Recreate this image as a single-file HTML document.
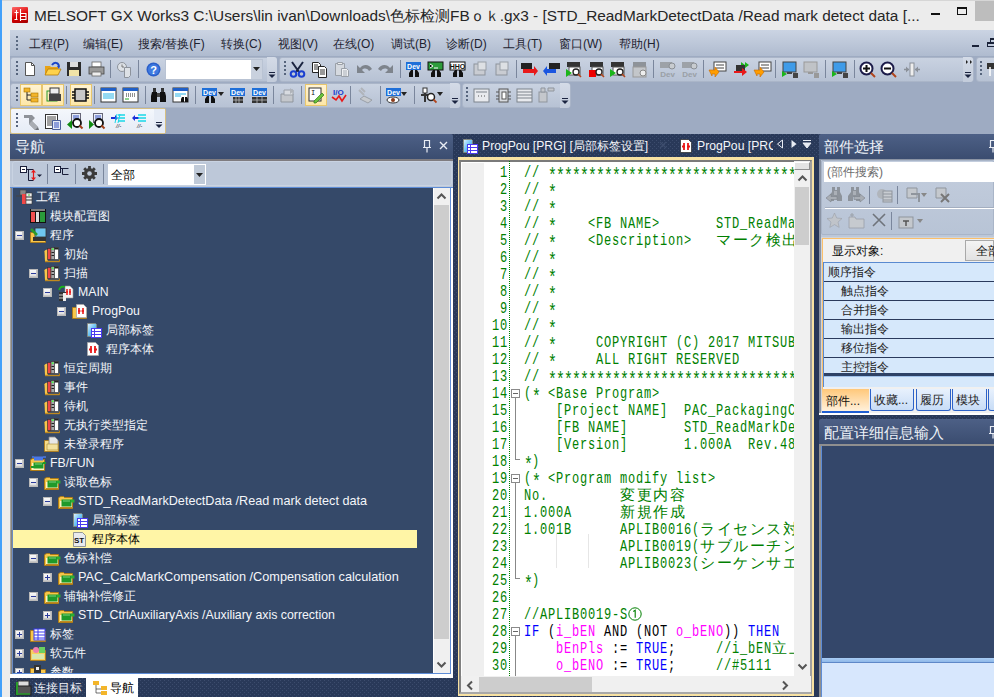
<!DOCTYPE html><html><head><meta charset="utf-8"><style>
*{box-sizing:border-box;margin:0;padding:0}
html,body{width:994px;height:697px;overflow:hidden;background:#a0adc3;font-family:"Liberation Sans",sans-serif;font-size:12px;color:#000;position:relative}
div,span{position:absolute}
.t{white-space:nowrap;line-height:1}
</style></head><body><div style="left:0px;top:0px;width:994px;height:697px;background:#ececec"></div><div style="left:0px;top:0px;width:2px;height:697px;background:#42a0fa"></div><div style="left:2px;top:0px;width:992px;height:1px;background:#d6d6d6"></div><div style="left:12px;top:7px;width:16px;height:16px;background:linear-gradient(160deg,#ff6a6a,#d80000 55%,#a00000);border-radius:1px"></div><svg style="position:absolute;left:12px;top:7px" width="16" height="16"><path d="M2.5 5.5h4M4.5 3v9.5M2.5 12.5h3M8.5 2v12M9 6.5h5v6h-5M9 9.5h5" stroke="#fff" stroke-width="1.1" fill="none"/></svg><span class="t" style="left:34px;top:8px;font-size:15.4px;color:#262626">MELSOFT GX Works3 C:\Users\lin ivan\Downloads\色标检测FBｏｋ.gx3 - [STD_ReadMarkDetectData /Read mark detect data [...</span><div style="left:931px;top:13px;width:9px;height:2px;background:#111"></div><div style="left:957px;top:7px;width:10px;height:8px;border:1px solid #111;border-top-width:2px"></div><div style="left:975px;top:1px;width:19px;height:20px;background:#bdbdbd"></div><div style="left:10px;top:30px;width:984px;height:26px;background:linear-gradient(#cbd4e3,#afbbcf)"></div><div style="left:16px;top:36px;width:2px;height:2px;background:#5b6a82"></div><div style="left:16px;top:40px;width:2px;height:2px;background:#5b6a82"></div><div style="left:16px;top:44px;width:2px;height:2px;background:#5b6a82"></div><div style="left:16px;top:48px;width:2px;height:2px;background:#5b6a82"></div><span class="t" style="left:29px;top:38px;font-size:12px;color:#1e2330">工程(P)</span><span class="t" style="left:83px;top:38px;font-size:12px;color:#1e2330">编辑(E)</span><span class="t" style="left:138px;top:38px;font-size:12px;color:#1e2330">搜索/替换(F)</span><span class="t" style="left:221px;top:38px;font-size:12px;color:#1e2330">转换(C)</span><span class="t" style="left:278px;top:38px;font-size:12px;color:#1e2330">视图(V)</span><span class="t" style="left:333px;top:38px;font-size:12px;color:#1e2330">在线(O)</span><span class="t" style="left:391px;top:38px;font-size:12px;color:#1e2330">调试(B)</span><span class="t" style="left:446px;top:38px;font-size:12px;color:#1e2330">诊断(D)</span><span class="t" style="left:503px;top:38px;font-size:12px;color:#1e2330">工具(T)</span><span class="t" style="left:559px;top:38px;font-size:12px;color:#1e2330">窗口(W)</span><span class="t" style="left:619px;top:38px;font-size:12px;color:#1e2330">帮助(H)</span><div style="left:972px;top:45px;width:7px;height:2px;background:#1a2238"></div><div style="left:990px;top:38px;width:6px;height:5px;border:1px solid #1a2238;border-top-width:2px"></div><div style="left:987px;top:42px;width:8px;height:5px;border:1px solid #1a2238;border-top-width:2px;background:#c0cadb"></div><div style="left:10px;top:56px;width:984px;height:78px;background:#9eabc2"></div><div style="left:10px;top:57px;width:267px;height:25px;background:linear-gradient(#c9d2e1,#b7c2d4);border:1px solid #aab5c8;border-radius:3px"></div><div style="left:16px;top:61px;width:2px;height:2px;background:#56647c"></div><div style="left:16px;top:65px;width:2px;height:2px;background:#56647c"></div><div style="left:16px;top:69px;width:2px;height:2px;background:#56647c"></div><div style="left:16px;top:73px;width:2px;height:2px;background:#56647c"></div><svg style="position:absolute;left:22px;top:61px" width="16" height="16" viewBox="0 0 16 16"><path d="M3.5 1.5h6l3 3v10h-9z" fill="#fff" stroke="#555"/><path d="M9.5 1.5v3h3" fill="none" stroke="#555"/></svg><svg style="position:absolute;left:44px;top:61px" width="18" height="16" viewBox="0 0 18 16"><path d="M1 5h5l1 1h7v8H1z" fill="#e8a317"/><path d="M1 14l3-6h13l-3 6z" fill="#ffd24a" stroke="#b57b0a" stroke-width=".8"/><path d="M8 4c2-3 6-3 7 1" stroke="#1a44c8" stroke-width="2" fill="none"/><path d="M13 5l3 0-1 3z" fill="#1a44c8"/></svg><svg style="position:absolute;left:66px;top:61px" width="16" height="16" viewBox="0 0 16 16"><rect x="1" y="1" width="14" height="14" fill="#2b2b2b"/><rect x="4" y="1" width="8" height="5" fill="#ddd"/><rect x="3" y="9" width="10" height="6" fill="#f0e3a8"/></svg><svg style="position:absolute;left:88px;top:61px" width="17" height="16" viewBox="0 0 17 16"><rect x="4" y="1" width="9" height="5" fill="#fff" stroke="#666" stroke-width=".8"/><rect x="1" y="6" width="15" height="7" fill="#9a9a9a" stroke="#444" stroke-width=".8"/><rect x="4" y="11" width="9" height="4" fill="#eee" stroke="#666" stroke-width=".8"/></svg><div style="left:110px;top:60px;width:1px;height:18px;background:#7a869c"></div><svg style="position:absolute;left:116px;top:61px" width="17" height="17" viewBox="0 0 17 17"><circle cx="6" cy="6" r="4.5" fill="#dde1e6" stroke="#8d939c"/><path d="M6 3.5V6h2" stroke="#777" fill="none"/><path d="M8.5 6.5h6v8l-2 2h-4z" fill="#dde1e6" stroke="#8d939c"/></svg><div style="left:138px;top:60px;width:1px;height:18px;background:#7a869c"></div><svg style="position:absolute;left:146px;top:62px" width="15" height="15" viewBox="0 0 15 15"><circle cx="7.5" cy="7.5" r="7" fill="#2a5ec9"/><circle cx="7.5" cy="7.5" r="5.5" fill="#3f7ae0"/><text x="7.5" y="11.5" font-size="11" font-weight="bold" fill="#fff" text-anchor="middle" font-family="Liberation Sans">?</text></svg><div style="left:165px;top:59px;width:98px;height:21px;background:#fff;border:1px solid #b9c3d3"></div><div style="left:251px;top:60px;width:11px;height:19px;background:#c9d1de"></div><svg style="position:absolute;left:253px;top:67px" width="7" height="4" viewBox="0 0 7 4"><path d="M0 0h7l-3.5 4z" fill="#222"/></svg><div style="left:267px;top:57px;width:10px;height:25px;background:linear-gradient(#d4dbe7,#c3ccdb);border-radius:0 3px 3px 0"></div><svg style="position:absolute;left:268px;top:71px" width="8" height="8"><path d="M1 1.5h6" stroke="#1b2440"/><path d="M0.5 3.5h7l-3.5 3.5z" fill="#1b2440"/></svg><div style="left:279px;top:57px;width:695px;height:25px;background:linear-gradient(#c9d2e1,#b7c2d4);border:1px solid #aab5c8;border-radius:3px"></div><div style="left:284px;top:61px;width:2px;height:2px;background:#56647c"></div><div style="left:284px;top:65px;width:2px;height:2px;background:#56647c"></div><div style="left:284px;top:69px;width:2px;height:2px;background:#56647c"></div><div style="left:284px;top:73px;width:2px;height:2px;background:#56647c"></div><svg style="position:absolute;left:289px;top:61px" width="17" height="17" viewBox="0 0 17 17"><path d="M3 1l7 10M14 1L7 11" stroke="#1b2440" stroke-width="2"/><circle cx="4.5" cy="13" r="2.8" fill="none" stroke="#1a3fd0" stroke-width="2"/><circle cx="12.5" cy="13" r="2.8" fill="none" stroke="#1a3fd0" stroke-width="2"/></svg><svg style="position:absolute;left:311px;top:61px" width="17" height="17" viewBox="0 0 17 17"><path d="M1.5 1.5h6l2 2v8h-8z" fill="#fff" stroke="#222"/><path d="M3 4h4M3 6h5M3 8h5" stroke="#333"/><path d="M7.5 5.5h6l2 2v9h-8z" fill="#fff" stroke="#222"/><path d="M9 9h5M9 11h5M9 13h5" stroke="#333"/></svg><svg style="position:absolute;left:334px;top:61px" width="17" height="17" viewBox="0 0 17 17"><path d="M1.5 2.5h9v12h-9z" fill="#d5d9df" stroke="#9aa0a8"/><path d="M3.5 1.5h5v2h-5z" fill="#eee" stroke="#9aa0a8"/><path d="M7.5 7.5h5l2 2v6h-7z" fill="#eef0f3" stroke="#9aa0a8"/><path d="M9 10h4M9 12h4M9 14h4" stroke="#a8aeb6"/></svg><svg style="position:absolute;left:356px;top:61px" width="17" height="17" viewBox="0 0 17 17"><g ><path d="M1 4v8h8l-3-3c2-2 5-2 7 1l3-2c-3-5-9-5-12-1z" fill="#7e848c"/></g></svg><svg style="position:absolute;left:377px;top:61px" width="17" height="17" viewBox="0 0 17 17"><g transform="translate(17,0) scale(-1,1)"><path d="M1 4v8h8l-3-3c2-2 5-2 7 1l3-2c-3-5-9-5-12-1z" fill="#7e848c"/></g></svg><div style="left:400px;top:60px;width:1px;height:18px;background:#7a869c"></div><svg style="position:absolute;left:405px;top:61px" width="17" height="17" viewBox="0 0 17 17"><rect x="1" y="1" width="15" height="8" fill="#1f6fd8"/><text x="8.5" y="8" font-size="7" font-weight="bold" fill="#fff" text-anchor="middle" font-family="Liberation Sans">Dev</text><path d="M6 9h2v7H4v-4zM10 9h2l2 3v4h-4z" fill="#111"/></svg><svg style="position:absolute;left:427px;top:61px" width="17" height="17" viewBox="0 0 17 17"><rect x="1" y="1" width="15" height="8" fill="#2d9c3c" stroke="#111"/><path d="M3 3l3 2-3 2M7 7h4" stroke="#fff"/><path d="M6 9h2v7H4v-4zM10 9h2l2 3v4h-4z" fill="#111"/></svg><svg style="position:absolute;left:449px;top:61px" width="17" height="17" viewBox="0 0 17 17"><rect x="1" y="1" width="15" height="8" fill="#fff" stroke="#111"/><text x="8.5" y="8" font-size="7" font-weight="bold" fill="#111" text-anchor="middle" font-family="Liberation Sans">HHO</text><path d="M6 9h2v7H4v-4zM10 9h2l2 3v4h-4z" fill="#111"/></svg><svg style="position:absolute;left:472px;top:61px" width="16" height="16" viewBox="0 0 16 16"><rect x="2" y="3" width="11" height="11" fill="#c9ccd2" stroke="#8d939c"/><rect x="6" y="1" width="8" height="8" fill="#dde0e4" stroke="#9aa0a8"/></svg><svg style="position:absolute;left:494px;top:61px" width="16" height="16" viewBox="0 0 16 16"><rect x="2" y="3" width="11" height="11" fill="#c9ccd2" stroke="#8d939c"/><rect x="6" y="1" width="8" height="8" fill="#dde0e4" stroke="#9aa0a8"/></svg><div style="left:516px;top:60px;width:1px;height:18px;background:#7a869c"></div><svg style="position:absolute;left:521px;top:61px" width="17" height="17" viewBox="0 0 17 17"><rect x="0" y="2" width="11" height="6" fill="#222"/><path d="M13 8l0-3 4 5-4 5 0-3H2v-4z" fill="#e8191a"/></svg><svg style="position:absolute;left:543px;top:61px" width="17" height="17" viewBox="0 0 17 17"><rect x="6" y="2" width="11" height="6" fill="#222"/><path d="M4 8l0-3 -4 5 4 5 0-3h9v-4z" fill="#1a55e0"/></svg><svg style="position:absolute;left:565px;top:61px" width="17" height="17" viewBox="0 0 17 17"><rect x="2" y="1" width="13" height="5" fill="#333"/><rect x="4" y="6" width="11" height="8" fill="#fff" stroke="#555"/><path d="M1 8v8l6-4z" fill="#1ab51a"/><circle cx="11" cy="11" r="3" fill="#fff" stroke="#222" stroke-width="1.3"/><path d="M13 13l3 3" stroke="#b1451c" stroke-width="1.6"/></svg><svg style="position:absolute;left:588px;top:61px" width="17" height="17" viewBox="0 0 17 17"><rect x="2" y="1" width="13" height="5" fill="#333"/><rect x="4" y="6" width="11" height="8" fill="#fff" stroke="#555"/><rect x="1" y="9" width="7" height="7" fill="#e00"/><circle cx="11" cy="11" r="3" fill="#fff" stroke="#222" stroke-width="1.3"/><path d="M13 13l3 3" stroke="#b1451c" stroke-width="1.6"/></svg><svg style="position:absolute;left:609px;top:61px" width="17" height="17" viewBox="0 0 17 17"><rect x="2" y="1" width="13" height="5" fill="#333"/><rect x="4" y="6" width="11" height="8" fill="#fff" stroke="#555"/><path d="M1 8v8l6-4z" fill="#1ab51a"/><circle cx="11" cy="11" r="3" fill="#fff" stroke="#222" stroke-width="1.3"/><path d="M13 13l3 3" stroke="#b1451c" stroke-width="1.6"/></svg><svg style="position:absolute;left:631px;top:61px" width="17" height="17" viewBox="0 0 17 17"><rect x="2" y="1" width="13" height="5" fill="#8e9399"/><rect x="2" y="6" width="13" height="10" fill="#c3c6ca" stroke="#999"/><circle cx="12" cy="12" r="3" fill="#eee" stroke="#888"/></svg><div style="left:653px;top:60px;width:1px;height:18px;background:#7a869c"></div><svg style="position:absolute;left:659px;top:61px" width="17" height="17" viewBox="0 0 17 17"><rect x="1" y="1" width="12" height="6" fill="#9da2a8"/><circle cx="13" cy="5" r="3" fill="#c8ccd0" stroke="#8a8f95"/><text x="8.5" y="16" font-size="8" font-weight="bold" fill="#9aa0a6" text-anchor="middle" font-family="Liberation Sans">Dev</text></svg><svg style="position:absolute;left:681px;top:61px" width="17" height="17" viewBox="0 0 17 17"><rect x="1" y="1" width="12" height="6" fill="#9da2a8"/><circle cx="13" cy="5" r="3" fill="#c8ccd0" stroke="#8a8f95"/><text x="8.5" y="16" font-size="8" font-weight="bold" fill="#9aa0a6" text-anchor="middle" font-family="Liberation Sans">Dev</text></svg><div style="left:703px;top:60px;width:1px;height:18px;background:#7a869c"></div><svg style="position:absolute;left:708px;top:61px" width="19" height="17" viewBox="0 0 19 17"><rect x="6" y="1" width="12" height="9" fill="#fff" stroke="#444"/><path d="M8 4h8M8 7h8" stroke="#444"/><path d="M1 9h6v-3l4 5-4 5v-3H4v2z" fill="#ff9d00" stroke="#c86800" stroke-width=".6"/></svg><svg style="position:absolute;left:733px;top:61px" width="17" height="17" viewBox="0 0 17 17"><path d="M8 1l4 3-4 3zM12 1l4 3-4 3z" fill="#1ab51a"/><rect x="3" y="4" width="9" height="7" fill="#333"/><path d="M1 10h8v-3l5 4-5 4v-3H1z" fill="#e8191a"/></svg><svg style="position:absolute;left:753px;top:61px" width="19" height="17" viewBox="0 0 19 17"><rect x="6" y="1" width="12" height="9" fill="#fff" stroke="#444"/><path d="M8 4h8M8 7h8" stroke="#444"/><path d="M1 9h6v-3l4 5-4 5v-3H4v2z" fill="#ff9d00" stroke="#c86800" stroke-width=".6"/></svg><div style="left:775px;top:60px;width:1px;height:18px;background:#7a869c"></div><svg style="position:absolute;left:781px;top:61px" width="18" height="17" viewBox="0 0 18 17"><rect x="2" y="1" width="13" height="10" fill="#3f9be8" stroke="#444"/><rect x="6" y="11" width="5" height="2" fill="#444"/><path d="M1 10v6l5-3z" fill="#1ab51a"/><rect x="12" y="12" width="5" height="5" fill="#444"/></svg><svg style="position:absolute;left:802px;top:61px" width="18" height="17" viewBox="0 0 18 17"><rect x="2" y="1" width="13" height="10" fill="#c0c3c7" stroke="#999"/><rect x="6" y="11" width="5" height="2" fill="#999"/><rect x="12" y="12" width="5" height="5" fill="#999"/></svg><div style="left:825px;top:60px;width:1px;height:18px;background:#7a869c"></div><svg style="position:absolute;left:831px;top:61px" width="18" height="17" viewBox="0 0 18 17"><rect x="2" y="1" width="13" height="10" fill="#3f9be8" stroke="#444"/><rect x="6" y="11" width="5" height="2" fill="#444"/><path d="M1 10v6l5-3z" fill="#1ab51a"/><rect x="12" y="12" width="5" height="5" fill="#444"/></svg><div style="left:854px;top:60px;width:1px;height:18px;background:#7a869c"></div><svg style="position:absolute;left:859px;top:61px" width="18" height="18" viewBox="0 0 18 18"><circle cx="7.5" cy="7.5" r="6" fill="#fff" stroke="#1c1c4a" stroke-width="2"/><path d="M4 7.5h7M7.5 4v7" stroke="#111" stroke-width="2"/><path d="M12 12l4 4" stroke="#b1451c" stroke-width="2"/></svg><svg style="position:absolute;left:880px;top:61px" width="18" height="18" viewBox="0 0 18 18"><circle cx="7.5" cy="7.5" r="6" fill="#fff" stroke="#1c1c4a" stroke-width="2"/><path d="M4 7.5h7" stroke="#111" stroke-width="2"/><path d="M12 12l4 4" stroke="#b1451c" stroke-width="2"/></svg><svg style="position:absolute;left:903px;top:61px" width="18" height="17" viewBox="0 0 18 17"><rect x="7" y="2" width="4" height="13" fill="#eee" stroke="#8a9099"/><path d="M1 8.5h5M12 8.5h5" stroke="#8a9099" stroke-width="1.5"/><path d="M6 8.5l-3-3v6zM12 8.5l3-3v6z" fill="#8a9099"/></svg><div style="left:963px;top:57px;width:10px;height:25px;background:linear-gradient(#d4dbe7,#c3ccdb);border-radius:0 3px 3px 0"></div><svg style="position:absolute;left:964px;top:71px" width="8" height="8"><path d="M1 1.5h6" stroke="#1b2440"/><path d="M0.5 3.5h7l-3.5 3.5z" fill="#1b2440"/></svg><svg style="position:absolute;left:965px;top:59px" width="8" height="6" viewBox="0 0 8 6"><path d="M1 1l2 2-2 2zM5 1l2 2-2 2z" fill="#222"/></svg><div style="left:976px;top:57px;width:30px;height:25px;background:linear-gradient(#c9d2e1,#b7c2d4);border:1px solid #aab5c8;border-radius:3px"></div><div style="left:980px;top:61px;width:2px;height:2px;background:#56647c"></div><div style="left:980px;top:65px;width:2px;height:2px;background:#56647c"></div><div style="left:980px;top:69px;width:2px;height:2px;background:#56647c"></div><div style="left:980px;top:73px;width:2px;height:2px;background:#56647c"></div><svg style="position:absolute;left:986px;top:62px" width="10" height="14" viewBox="0 0 10 14"><rect x="1" y="1" width="9" height="6" fill="#333"/><path d="M4 5v9" stroke="#fff" stroke-width="1.5"/></svg><div style="left:10px;top:83px;width:451px;height:25px;background:linear-gradient(#c9d2e1,#b7c2d4);border:1px solid #aab5c8;border-radius:3px"></div><div style="left:16px;top:87px;width:2px;height:2px;background:#56647c"></div><div style="left:16px;top:91px;width:2px;height:2px;background:#56647c"></div><div style="left:16px;top:95px;width:2px;height:2px;background:#56647c"></div><div style="left:16px;top:99px;width:2px;height:2px;background:#56647c"></div><div style="left:20px;top:84px;width:22px;height:22px;background:linear-gradient(#fff3d2,#fde7a8);border:1px solid #e7c66e"></div><svg style="position:absolute;left:23px;top:87px" width="16" height="16" viewBox="0 0 16 16"><path d="M4 4v9h5M4 8h5" stroke="#222" fill="none"/><rect x="1" y="1" width="6" height="4" fill="#f3b52a" stroke="#a87400" stroke-width=".6"/><rect x="8" y="6" width="7" height="4" fill="#f3b52a" stroke="#a87400" stroke-width=".6"/><rect x="8" y="11" width="7" height="4" fill="#f3b52a" stroke="#a87400" stroke-width=".6"/></svg><div style="left:42px;top:84px;width:22px;height:22px;background:linear-gradient(#fff3d2,#fde7a8);border:1px solid #e7c66e"></div><svg style="position:absolute;left:45px;top:87px" width="17" height="16" viewBox="0 0 17 16"><rect x="2" y="4" width="10" height="10" fill="none" stroke="#2a9a2a"/><rect x="5" y="1" width="9" height="6" fill="#eee" stroke="#333"/><rect x="4" y="7" width="12" height="7" fill="#444"/></svg><div style="left:66px;top:86px;width:1px;height:18px;background:#7a869c"></div><div style="left:70px;top:84px;width:22px;height:22px;background:linear-gradient(#fff3d2,#fde7a8);border:1px solid #e7c66e"></div><svg style="position:absolute;left:72px;top:87px" width="17" height="16" viewBox="0 0 17 16"><rect x="3" y="2" width="11" height="12" fill="#c8c8c8" stroke="#111" stroke-width="1.5"/><path d="M0 5h3M0 8h3M0 11h3M14 5h3M14 8h3M14 11h3" stroke="#111" stroke-width="1.5"/></svg><div style="left:94px;top:86px;width:1px;height:18px;background:#7a869c"></div><svg style="position:absolute;left:100px;top:87px" width="17" height="16" viewBox="0 0 17 16"><rect x="1" y="1" width="15" height="14" fill="#fff" stroke="#333"/><rect x="1" y="1" width="15" height="3" fill="#1f5fc8"/><path d="M3 7h11M3 9h11M3 11h11" stroke="#29b3e6"/></svg><svg style="position:absolute;left:122px;top:87px" width="17" height="16" viewBox="0 0 17 16"><rect x="1" y="1" width="15" height="14" fill="#fff" stroke="#333"/><rect x="1" y="1" width="15" height="3" fill="#1f5fc8"/><path d="M4 7h1M6 7h1M8 7h1M10 7h1M12 7h1M4 9h1M6 9h1M8 9h1M10 9h1M12 9h1" stroke="#222"/><path d="M3 12h4" stroke="#2a2"/></svg><div style="left:145px;top:86px;width:1px;height:18px;background:#7a869c"></div><svg style="position:absolute;left:150px;top:87px" width="17" height="16" viewBox="0 0 17 16"><path d="M2 5h5v10H1v-6zM10 5h5l1 4v6h-6z" fill="#111"/><rect x="7" y="6" width="3" height="4" fill="#444"/><rect x="3" y="1" width="3" height="4" fill="#333"/><rect x="11" y="1" width="3" height="4" fill="#333"/></svg><svg style="position:absolute;left:172px;top:87px" width="17" height="16" viewBox="0 0 17 16"><rect x="1" y="1" width="15" height="14" fill="#fff" stroke="#333"/><rect x="1" y="1" width="15" height="3" fill="#1f5fc8"/><path d="M3 7h11M3 9h6" stroke="#29b3e6"/><path d="M10 10h2v5H9v-3zM13 10h2l1 2v3h-3z" fill="#111"/></svg><div style="left:195px;top:86px;width:1px;height:18px;background:#7a869c"></div><svg style="position:absolute;left:201px;top:87px" width="17" height="17" viewBox="0 0 17 17"><rect x="1" y="1" width="15" height="8" fill="#1f6fd8"/><text x="8.5" y="8" font-size="7" font-weight="bold" fill="#fff" text-anchor="middle" font-family="Liberation Sans">Dev</text><path d="M6 9h2v7H4v-4zM10 9h2l2 3v4h-4z" fill="#111"/></svg><svg style="position:absolute;left:218px;top:92px" width="6" height="4" viewBox="0 0 6 4"><path d="M0 0h6l-3 4z" fill="#222"/></svg><svg style="position:absolute;left:229px;top:87px" width="17" height="17" viewBox="0 0 17 17"><rect x="1" y="1" width="15" height="8" fill="#1f6fd8"/><text x="8.5" y="8" font-size="7" font-weight="bold" fill="#fff" text-anchor="middle" font-family="Liberation Sans">Dev</text><rect x="4" y="10" width="10" height="6" fill="#333"/><path d="M4 13h10M7 10v6M10 10v6" stroke="#ccc" stroke-width=".7"/></svg><svg style="position:absolute;left:251px;top:87px" width="17" height="17" viewBox="0 0 17 17"><rect x="1" y="1" width="15" height="8" fill="#1f6fd8"/><text x="8.5" y="8" font-size="7" font-weight="bold" fill="#fff" text-anchor="middle" font-family="Liberation Sans">Dev</text><rect x="1" y="10" width="15" height="6" fill="#333"/><path d="M1 13h15M6 10v6M11 10v6" stroke="#ccc" stroke-width=".7"/></svg><div style="left:273px;top:86px;width:1px;height:18px;background:#7a869c"></div><svg style="position:absolute;left:279px;top:87px" width="17" height="16" viewBox="0 0 17 16"><path d="M2 7h12v8H2z" fill="#c4c7cc" stroke="#8f959d"/><path d="M5 3h9v5H5z" fill="#d8dbe0" stroke="#9aa0a8"/><path d="M11 1l4 3-4 3" fill="#b0b4ba"/></svg><div style="left:301px;top:86px;width:1px;height:18px;background:#7a869c"></div><div style="left:305px;top:84px;width:22px;height:22px;background:linear-gradient(#fff3d2,#fde7a8);border:1px solid #e7c66e"></div><svg style="position:absolute;left:308px;top:87px" width="17" height="17" viewBox="0 0 17 17"><rect x="1" y="1" width="12" height="13" fill="#fff" stroke="#333"/><text x="3" y="8" font-size="7" fill="#111" font-family="Liberation Mono">I</text><path d="M6 14l8-8 2 2-8 8H6z" fill="#6ac13a" stroke="#2f7a1a" stroke-width=".7"/></svg><svg style="position:absolute;left:330px;top:87px" width="17" height="17" viewBox="0 0 17 17"><text x="3" y="8" font-size="8" font-weight="bold" fill="#1a3fd0" font-family="Liberation Sans">I/O</text><path d="M2 10l4 3 3-4 3 5 4-6" stroke="#e8191a" stroke-width="1.6" fill="none"/></svg><div style="left:350px;top:86px;width:1px;height:18px;background:#7a869c"></div><svg style="position:absolute;left:356px;top:87px" width="18" height="17" viewBox="0 0 18 17"><path d="M3 3l5 5M5 1l4 4" stroke="#b0b4ba" stroke-width="2"/><path d="M4 12l4-3 8 4-4 3z" fill="#c7cace" stroke="#9aa0a8"/></svg><div style="left:380px;top:86px;width:1px;height:18px;background:#7a869c"></div><svg style="position:absolute;left:385px;top:87px" width="17" height="17" viewBox="0 0 17 17"><rect x="1" y="1" width="15" height="8" fill="#1f6fd8"/><text x="8.5" y="8" font-size="7" font-weight="bold" fill="#fff" text-anchor="middle" font-family="Liberation Sans">Dev</text><ellipse cx="8" cy="13" rx="6" ry="3" fill="#fff" stroke="#333"/><circle cx="8" cy="13" r="2" fill="#8b3a1a"/></svg><svg style="position:absolute;left:401px;top:92px" width="6" height="4" viewBox="0 0 6 4"><path d="M0 0h6l-3 4z" fill="#222"/></svg><div style="left:414px;top:86px;width:1px;height:18px;background:#7a869c"></div><svg style="position:absolute;left:420px;top:87px" width="17" height="17" viewBox="0 0 17 17"><rect x="3" y="1" width="4" height="5" fill="#fff" stroke="#333"/><rect x="4" y="6" width="2" height="9" fill="#333"/><path d="M1 8h8" stroke="#333" stroke-width="2"/><circle cx="11" cy="10" r="3.5" fill="#fff" stroke="#222" stroke-width="1.5"/><path d="M13.5 12.5l3 3" stroke="#b1451c" stroke-width="1.8"/></svg><svg style="position:absolute;left:437px;top:92px" width="6" height="4" viewBox="0 0 6 4"><path d="M0 0h6l-3 4z" fill="#222"/></svg><div style="left:450px;top:83px;width:10px;height:25px;background:linear-gradient(#d4dbe7,#c3ccdb);border-radius:0 3px 3px 0"></div><svg style="position:absolute;left:451px;top:97px" width="8" height="8"><path d="M1 1.5h6" stroke="#1b2440"/><path d="M0.5 3.5h7l-3.5 3.5z" fill="#1b2440"/></svg><div style="left:462px;top:83px;width:109px;height:25px;background:linear-gradient(#c9d2e1,#b7c2d4);border:1px solid #aab5c8;border-radius:3px"></div><div style="left:466px;top:87px;width:2px;height:2px;background:#56647c"></div><div style="left:466px;top:91px;width:2px;height:2px;background:#56647c"></div><div style="left:466px;top:95px;width:2px;height:2px;background:#56647c"></div><div style="left:466px;top:99px;width:2px;height:2px;background:#56647c"></div><svg style="position:absolute;left:473px;top:88px" width="17" height="15" viewBox="0 0 17 15"><rect x="1" y="1" width="15" height="13" fill="#e8eaee" stroke="#7d838c"/><path d="M3 4h11" stroke="#7d838c"/><path d="M5 8h1M8 8h1M11 8h1" stroke="#555"/></svg><svg style="position:absolute;left:495px;top:88px" width="17" height="15" viewBox="0 0 17 15"><rect x="4" y="1" width="9" height="13" fill="#d8dbe0" stroke="#555"/><rect x="7" y="4" width="4" height="7" fill="#fff" stroke="#555"/><path d="M1 4h3M1 8h3M1 11h3M13 4h3M13 8h3M13 11h3" stroke="#555"/></svg><svg style="position:absolute;left:516px;top:88px" width="17" height="15" viewBox="0 0 17 15"><rect x="1" y="1" width="15" height="13" fill="#e8eaee" stroke="#7d838c"/><path d="M1 4h15M1 7h15M1 10h15" stroke="#7d838c"/></svg><svg style="position:absolute;left:538px;top:87px" width="17" height="16" viewBox="0 0 17 16"><rect x="1" y="5" width="8" height="10" fill="#c4c7cc" stroke="#8f959d"/><path d="M3 1h4v4H3zM10 1h6v3h-6z" fill="#c4c7cc" stroke="#8f959d"/></svg><div style="left:560px;top:83px;width:10px;height:25px;background:linear-gradient(#d4dbe7,#c3ccdb);border-radius:0 3px 3px 0"></div><svg style="position:absolute;left:561px;top:97px" width="8" height="8"><path d="M1 1.5h6" stroke="#1b2440"/><path d="M0.5 3.5h7l-3.5 3.5z" fill="#1b2440"/></svg><div style="left:10px;top:108px;width:156px;height:26px;background:linear-gradient(#f4f7fc,#e6ecf6);border:1px solid #d6bf82;border-radius:2px"></div><div style="left:16px;top:113px;width:2px;height:2px;background:#56647c"></div><div style="left:16px;top:117px;width:2px;height:2px;background:#56647c"></div><div style="left:16px;top:121px;width:2px;height:2px;background:#56647c"></div><div style="left:16px;top:125px;width:2px;height:2px;background:#56647c"></div><svg style="position:absolute;left:23px;top:113px" width="17" height="17" viewBox="0 0 17 17"><path d="M1 2h8l3 3-3 3 6 6-3 3-6-6V5H1z" fill="#8f9399"/><path d="M9 8l6 6-3 3-6-6z" fill="#a9adb3"/><path d="M12 17l3-3 1 3z" fill="#6d7177"/></svg><svg style="position:absolute;left:44px;top:113px" width="18" height="17" viewBox="0 0 18 17"><rect x="1.5" y="1.5" width="12" height="14" fill="#fff" stroke="#333"/><path d="M3 4h9M3 6h9M3 8h9M3 10h9M3 12h9" stroke="#444"/><path d="M8.5 7.5h8v9h-8z" fill="#e6ebf5" stroke="#4a5f9a"/><path d="M10 10h5M10 12h5M10 14h5" stroke="#3550c0"/></svg><svg style="position:absolute;left:66px;top:112px" width="19" height="18" viewBox="0 0 19 18"><rect x="5.5" y="1.5" width="9" height="9" fill="#e8edf7" stroke="#667"/><path d="M7 4h6M7 6h6" stroke="#3550c0"/><circle cx="11" cy="11" r="4" fill="#fff" stroke="#111" stroke-width="1.8"/><path d="M13.5 13.5l3 3" stroke="#a0401a" stroke-width="2"/><path d="M6 8v9l-5-4.5z" fill="#118a11"/></svg><svg style="position:absolute;left:88px;top:112px" width="19" height="18" viewBox="0 0 19 18"><rect x="5.5" y="1.5" width="9" height="9" fill="#e8edf7" stroke="#667"/><path d="M7 4h6M7 6h6" stroke="#3550c0"/><circle cx="11" cy="11" r="4" fill="#fff" stroke="#111" stroke-width="1.8"/><path d="M13.5 13.5l3 3" stroke="#a0401a" stroke-width="2"/><path d="M1 8v9l5-4.5z" fill="#118a11"/></svg><svg style="position:absolute;left:110px;top:112px" width="17" height="18" viewBox="0 0 17 18"><path d="M1 5h4v-2l3 3-3 3v-2H1z" fill="#1a2fd8"/><path d="M8 3h7M8 6h7M8 9h7" stroke="#18d8e8" stroke-width="1.4"/><path d="M7 2l-2 9M10 2l-2 9" stroke="#18d8e8" stroke-width="1"/><text x="6" y="16" font-size="6" fill="#222" font-family="Liberation Sans" font-style="italic">//-</text></svg><svg style="position:absolute;left:131px;top:112px" width="17" height="18" viewBox="0 0 17 18"><path d="M8 5H4v-2L1 6l3 3v-2h4z" fill="#1a2fd8"/><path d="M7 3h8M7 6h8M7 9h8" stroke="#18d8e8" stroke-width="1.4"/><text x="6" y="16" font-size="6" fill="#222" font-family="Liberation Sans" font-style="italic">//-</text></svg><div style="left:154px;top:109px;width:11px;height:24px;background:#e6ecf6"></div><svg style="position:absolute;left:155px;top:121px" width="8" height="8" viewBox="0 0 8 8"><path d="M1 1.5h6" stroke="#1b2440"/><path d="M0.5 3.5h7l-3.5 3.5z" fill="#1b2440"/></svg><div style="left:10px;top:134px;width:984px;height:563px;background:conic-gradient(from 270deg at 1px 1px,#3c4c6d 25%,transparent 0) 0 0/4px 4px,conic-gradient(from 270deg at 1px 1px,#3c4c6d 25%,transparent 0) 2px 2px/4px 4px,#293959"></div><div style="left:10px;top:134px;width:443px;height:26px;background:linear-gradient(#4d6086,#3a4c6f);border-radius:2px 2px 0 0"></div><span class="t" style="left:15px;top:140px;font-size:14.5px;color:#eef2f8">导航</span><svg style="position:absolute;left:422px;top:139px" width="10" height="14" viewBox="0 0 10 14"><path d="M2.5 1.5h5v7h-5zM1 8.5h8M5 8.5v5" stroke="#e8ecf4" stroke-width="1.2" fill="none"/></svg><svg style="position:absolute;left:439px;top:141px" width="9" height="9" viewBox="0 0 9 9"><path d="M1 1l7 7M8 1L1 8" stroke="#e8ecf4" stroke-width="1.4"/></svg><div style="left:10px;top:159px;width:443px;height:29px;background:#bdc8d9;border-top:2px solid #7f7c80"></div><div style="left:12px;top:161px;width:440px;height:25px;background:#bdc8d9;border:1px solid #c9d3e2;border-radius:3px"></div><svg style="position:absolute;left:19px;top:165px" width="24" height="18" viewBox="0 0 24 18"><rect x="1.5" y="1.5" width="6" height="6" fill="#fff" stroke="#1a1f3a"/><path d="M3 4.5h3" stroke="#1a1f3a"/><path d="M7.5 4.5h7M9.5 4.5v11M9.5 15.5h5" stroke="#1a1f3a" fill="none"/><path d="M12 7.5l2.5-3 2.5 3zM12 12.5l2.5 3 2.5-3z" fill="#e81818"/><path d="M14.5 7v6" stroke="#e81818" stroke-width="1.2"/><path d="M18 9.5h5l-2.5 2.5z" fill="#1a1f3a"/></svg><div style="left:47px;top:164px;width:1px;height:20px;background:#7a869c"></div><svg style="position:absolute;left:53px;top:165px" width="18" height="12" viewBox="0 0 18 12"><rect x="1.5" y="1.5" width="6" height="6" fill="#fff" stroke="#1a1f3a"/><path d="M3 4.5h3" stroke="#1a1f3a"/><path d="M7.5 3.5h8M9.5 3.5v6M9.5 9.5h6" stroke="#1a1f3a" fill="none"/></svg><div style="left:75px;top:164px;width:1px;height:20px;background:#7a869c"></div><svg style="position:absolute;left:81px;top:165px" width="17" height="17" viewBox="0 0 17 17"><circle cx="8.5" cy="8.5" r="5.5" fill="#3a3a3a"/><circle cx="8.5" cy="8.5" r="2.3" fill="#bdc8d9"/><path d="M8.5 1v3M8.5 13v3M1 8.5h3M13 8.5h3M3.2 3.2l2 2M11.8 11.8l2 2M3.2 13.8l2-2M11.8 5.2l2-2" stroke="#3a3a3a" stroke-width="2.8"/></svg><div style="left:103px;top:164px;width:1px;height:20px;background:#7a869c"></div><div style="left:108px;top:164px;width:98px;height:21px;background:#fff"></div><span class="t" style="left:111px;top:169px;font-size:12px;color:#000">全部</span><div style="left:194px;top:165px;width:11px;height:19px;background:#c0cad8"></div><svg style="position:absolute;left:196px;top:173px" width="7" height="4" viewBox="0 0 7 4"><path d="M0 0h7l-3.5 4z" fill="#222"/></svg><div style="left:10px;top:187px;width:443px;height:1px;background:#5d8cd6"></div><div style="left:12px;top:188px;width:440px;height:485px;background:#354969"></div><div style="left:12px;top:188px;width:1px;height:485px;background:#6b8cc4"></div><div style="left:10px;top:188px;width:2px;height:486px;background:linear-gradient(90deg,#b8b6b2,#77736e)"></div><div style="left:433px;top:188px;width:1px;height:485px;background:#fff"></div><div style="left:434px;top:188px;width:16px;height:485px;background:#f0f0f0"></div><div style="left:434px;top:205px;width:15px;height:434px;background:#cdcdcd"></div><svg style="position:absolute;left:436px;top:192px" width="11" height="8" viewBox="0 0 11 8"><path d="M1.5 6.5l4-4 4 4" stroke="#555" stroke-width="2" fill="none"/></svg><svg style="position:absolute;left:436px;top:661px" width="11" height="8" viewBox="0 0 11 8"><path d="M1.5 1.5l4 4 4-4" stroke="#555" stroke-width="2" fill="none"/></svg><div style="left:450px;top:188px;width:1px;height:486px;background:#5d8cd6"></div><div style="left:451px;top:188px;width:2px;height:490px;background:#fff"></div><div style="left:12px;top:673px;width:439px;height:1px;background:#5d8cd6"></div><div style="left:10px;top:674px;width:443px;height:4px;background:#fff"></div><div style="left:10px;top:678px;width:76px;height:19px;background:conic-gradient(from 270deg at 1px 1px,#3c4c6d 25%,transparent 0) 0 0/4px 4px,conic-gradient(from 270deg at 1px 1px,#3c4c6d 25%,transparent 0) 2px 2px/4px 4px,#293959"></div><svg style="position:absolute;left:15px;top:680px" width="17" height="17" viewBox="0 0 17 17"><rect x="3" y="1" width="11" height="6" fill="#ddd" stroke="#333"/><rect x="1" y="6" width="15" height="9" fill="#555" stroke="#222"/><path d="M2 14h13" stroke="#2a9a2a" stroke-width="1.5"/><rect x="1" y="2" width="2" height="13" fill="#2a9a2a"/></svg><span class="t" style="left:34px;top:682px;font-size:12px;color:#f2f4f8">连接目标</span><div style="left:86px;top:678px;width:52px;height:19px;background:#fff"></div><svg style="position:absolute;left:92px;top:680px" width="16" height="16" viewBox="0 0 16 16"><path d="M4 5v8h5M4 9h5" stroke="#333" fill="none" stroke-width=".7"/><rect x="1" y="1" width="6" height="4" fill="#f3b52a"/><rect x="9" y="6" width="6" height="4" fill="#f3b52a"/><rect x="9" y="11" width="6" height="4" fill="#f3b52a"/></svg><span class="t" style="left:110px;top:682px;font-size:12px;color:#000">导航</span><div style="left:13px;top:188px;width:420px;height:485px;overflow:hidden"><svg style="position:absolute;left:3px;top:1px" width="17" height="16" viewBox="0 0 17 16"><rect x="4" y="1" width="6" height="5" fill="#888" stroke="#444" stroke-width=".6"/><path d="M0 7h10" stroke="#444"/><rect x="6" y="5" width="4" height="10" fill="#f04848"/><rect x="10" y="4" width="6" height="11" fill="#eee" stroke="#333" stroke-width=".6"/><path d="M10 8h6M10 11h6" stroke="#333"/><circle cx="13" cy="6" r=".8" fill="#2c2"/></svg><span class="t" style="left:23px;top:3px;font-size:12px;color:#f4f6fa">工程</span><svg style="position:absolute;left:17px;top:20px" width="16" height="16" viewBox="0 0 16 16"><rect x="0" y="1" width="16" height="14" fill="#111"/><rect x="1" y="4" width="4" height="10" fill="#f05050"/><rect x="6" y="4" width="3" height="10" fill="#ddd"/><rect x="10" y="4" width="5" height="10" fill="#2a9a3a"/><path d="M1 2h14" stroke="#eee"/></svg><span class="t" style="left:37px;top:22px;font-size:12px;color:#f4f6fa">模块配置图</span><div style="left:2px;top:43px;width:9px;height:9px;background:linear-gradient(#fafafa,#dcdcdc);border:1px solid #b9b9b9;box-shadow:inset -1px -1px 0 #c8c8c8"></div><div style="left:4px;top:47px;width:5px;height:1px;background:#2c3c9c"></div><svg style="position:absolute;left:17px;top:39px" width="17" height="16" viewBox="0 0 17 16"><path d="M0.5 5.5h5l1 1h9v9h-15z" fill="#f7c64a" stroke="#b07a10" stroke-width=".8"/><rect x="5" y="1" width="11" height="9" fill="#6fc7ef" stroke="#333" stroke-width=".8"/><rect x="3" y="10" width="13" height="4" fill="#333"/><path d="M1 2l6 6" stroke="#2a9a2a" stroke-width="2.5"/></svg><span class="t" style="left:37px;top:41px;font-size:12px;color:#f4f6fa">程序</span><svg style="position:absolute;left:31px;top:58px" width="16" height="17" viewBox="0 0 16 17"><path d="M0.5 5.5h3v10h12v-2" fill="none" stroke="#b07a10" stroke-width="1"/><path d="M0.5 5.5c0-1 1-2 3-2v12H1z" fill="#f7c64a"/><path d="M1 15.5h14.5" stroke="#c08a20" stroke-width="1.4"/><rect x="3.5" y="2.5" width="3.5" height="11" fill="#f04848" stroke="#333" stroke-width=".6"/><rect x="7" y="1.5" width="3.5" height="12" fill="#a8a8a8" stroke="#333" stroke-width=".6"/><circle cx="8.7" cy="3.2" r=".9" fill="#4f4"/><path d="M7.5 6.5h2.5M7.5 9.5h2.5" stroke="#222"/><rect x="10.5" y="1.5" width="4" height="12" fill="#fff" stroke="#333" stroke-width=".6"/><rect x="10.5" y="1.5" width="4" height="2" fill="#222"/></svg><span class="t" style="left:51px;top:60px;font-size:12px;color:#f4f6fa">初始</span><div style="left:16px;top:81px;width:9px;height:9px;background:linear-gradient(#fafafa,#dcdcdc);border:1px solid #b9b9b9;box-shadow:inset -1px -1px 0 #c8c8c8"></div><div style="left:18px;top:85px;width:5px;height:1px;background:#2c3c9c"></div><svg style="position:absolute;left:31px;top:77px" width="16" height="17" viewBox="0 0 16 17"><path d="M0.5 5.5h3v10h12v-2" fill="none" stroke="#b07a10" stroke-width="1"/><path d="M0.5 5.5c0-1 1-2 3-2v12H1z" fill="#f7c64a"/><path d="M1 15.5h14.5" stroke="#c08a20" stroke-width="1.4"/><rect x="3.5" y="2.5" width="3.5" height="11" fill="#f04848" stroke="#333" stroke-width=".6"/><rect x="7" y="1.5" width="3.5" height="12" fill="#a8a8a8" stroke="#333" stroke-width=".6"/><circle cx="8.7" cy="3.2" r=".9" fill="#4f4"/><path d="M7.5 6.5h2.5M7.5 9.5h2.5" stroke="#222"/><rect x="10.5" y="1.5" width="4" height="12" fill="#fff" stroke="#333" stroke-width=".6"/><rect x="10.5" y="1.5" width="4" height="2" fill="#222"/></svg><span class="t" style="left:51px;top:79px;font-size:12px;color:#f4f6fa">扫描</span><div style="left:30px;top:100px;width:9px;height:9px;background:linear-gradient(#fafafa,#dcdcdc);border:1px solid #b9b9b9;box-shadow:inset -1px -1px 0 #c8c8c8"></div><div style="left:32px;top:104px;width:5px;height:1px;background:#2c3c9c"></div><svg style="position:absolute;left:45px;top:96px" width="16" height="17" viewBox="0 0 16 17"><path d="M7 2h5l3 3v9H7z" fill="#f4f4f4" stroke="#999" stroke-width=".6"/><path d="M9 5v6M12 5v6M8 8h2M11 8h2" stroke="#e81818" stroke-width="1.5"/><path d="M1 6c1-3 3-4 6-3" stroke="#1ab51a" stroke-width="1.6" fill="none"/><rect x="1" y="8" width="7" height="9" fill="#333"/><path d="M1 11h7M1 14h7" stroke="#ccc"/><rect x="5" y="9" width="3" height="8" fill="#eee"/></svg><span class="t" style="left:65px;top:98px;font-size:12.3px;color:#f4f6fa">MAIN</span><div style="left:44px;top:119px;width:9px;height:9px;background:linear-gradient(#fafafa,#dcdcdc);border:1px solid #b9b9b9;box-shadow:inset -1px -1px 0 #c8c8c8"></div><div style="left:46px;top:123px;width:5px;height:1px;background:#2c3c9c"></div><svg style="position:absolute;left:59px;top:115px" width="16" height="16" viewBox="0 0 16 16"><path d="M0.5 4.5h5l1 1h8v10h-14z" fill="#f7c64a" stroke="#b07a10" stroke-width=".8"/><path d="M4.5 1.5h7l3 3v10h-10z" fill="#fff" stroke="#aaa" stroke-width=".8"/><path d="M7 5v6M11 5v6M6 8h2.5M9.5 8h2.5" stroke="#e81818" stroke-width="1.6"/></svg><span class="t" style="left:79px;top:117px;font-size:12.3px;color:#f4f6fa">ProgPou</span><svg style="position:absolute;left:73px;top:134px" width="17" height="16" viewBox="0 0 17 16"><path d="M1.5 1.5h8l1 1v12h-9z" fill="url(#lg1)" stroke="#8a8a7a" stroke-width=".8"/><rect x="5.5" y="6.5" width="10" height="9" fill="#fff" stroke="#4a3af0"/><path d="M5.5 9.5h10M5.5 12.5h10M8.5 6.5v9" stroke="#4a3af0"/></svg><span class="t" style="left:93px;top:136px;font-size:12px;color:#f4f6fa">局部标签</span><svg style="position:absolute;left:73px;top:153px" width="15" height="16" viewBox="0 0 15 16"><path d="M1.5 1.5h8l3 3v10h-11z" fill="#fff" stroke="#aaa" stroke-width=".8"/><path d="M5 5v7M9 5v7M3 8.5h3M8 8.5h3" stroke="#e81818" stroke-width="1.8"/></svg><span class="t" style="left:93px;top:155px;font-size:12px;color:#f4f6fa">程序本体</span><svg style="position:absolute;left:31px;top:172px" width="16" height="17" viewBox="0 0 16 17"><path d="M0.5 5.5h3v10h12v-2" fill="none" stroke="#b07a10" stroke-width="1"/><path d="M0.5 5.5c0-1 1-2 3-2v12H1z" fill="#f7c64a"/><path d="M1 15.5h14.5" stroke="#c08a20" stroke-width="1.4"/><rect x="3.5" y="2.5" width="3.5" height="11" fill="#f04848" stroke="#333" stroke-width=".6"/><rect x="7" y="1.5" width="3.5" height="12" fill="#a8a8a8" stroke="#333" stroke-width=".6"/><circle cx="8.7" cy="3.2" r=".9" fill="#4f4"/><path d="M7.5 6.5h2.5M7.5 9.5h2.5" stroke="#222"/><rect x="10.5" y="1.5" width="4" height="12" fill="#fff" stroke="#333" stroke-width=".6"/><rect x="10.5" y="1.5" width="4" height="2" fill="#222"/></svg><span class="t" style="left:51px;top:174px;font-size:12px;color:#f4f6fa">恒定周期</span><svg style="position:absolute;left:31px;top:191px" width="16" height="17" viewBox="0 0 16 17"><path d="M0.5 5.5h3v10h12v-2" fill="none" stroke="#b07a10" stroke-width="1"/><path d="M0.5 5.5c0-1 1-2 3-2v12H1z" fill="#f7c64a"/><path d="M1 15.5h14.5" stroke="#c08a20" stroke-width="1.4"/><rect x="3.5" y="2.5" width="3.5" height="11" fill="#f04848" stroke="#333" stroke-width=".6"/><rect x="7" y="1.5" width="3.5" height="12" fill="#a8a8a8" stroke="#333" stroke-width=".6"/><circle cx="8.7" cy="3.2" r=".9" fill="#4f4"/><path d="M7.5 6.5h2.5M7.5 9.5h2.5" stroke="#222"/><rect x="10.5" y="1.5" width="4" height="12" fill="#fff" stroke="#333" stroke-width=".6"/><rect x="10.5" y="1.5" width="4" height="2" fill="#222"/></svg><span class="t" style="left:51px;top:193px;font-size:12px;color:#f4f6fa">事件</span><svg style="position:absolute;left:31px;top:210px" width="16" height="17" viewBox="0 0 16 17"><path d="M0.5 5.5h3v10h12v-2" fill="none" stroke="#b07a10" stroke-width="1"/><path d="M0.5 5.5c0-1 1-2 3-2v12H1z" fill="#f7c64a"/><path d="M1 15.5h14.5" stroke="#c08a20" stroke-width="1.4"/><rect x="3.5" y="2.5" width="3.5" height="11" fill="#f04848" stroke="#333" stroke-width=".6"/><rect x="7" y="1.5" width="3.5" height="12" fill="#a8a8a8" stroke="#333" stroke-width=".6"/><circle cx="8.7" cy="3.2" r=".9" fill="#4f4"/><path d="M7.5 6.5h2.5M7.5 9.5h2.5" stroke="#222"/><rect x="10.5" y="1.5" width="4" height="12" fill="#fff" stroke="#333" stroke-width=".6"/><rect x="10.5" y="1.5" width="4" height="2" fill="#222"/></svg><span class="t" style="left:51px;top:212px;font-size:12px;color:#f4f6fa">待机</span><svg style="position:absolute;left:31px;top:229px" width="16" height="17" viewBox="0 0 16 17"><path d="M0.5 5.5h3v10h12v-2" fill="none" stroke="#b07a10" stroke-width="1"/><path d="M0.5 5.5c0-1 1-2 3-2v12H1z" fill="#f7c64a"/><path d="M1 15.5h14.5" stroke="#c08a20" stroke-width="1.4"/><rect x="3.5" y="2.5" width="3.5" height="11" fill="#f04848" stroke="#333" stroke-width=".6"/><rect x="7" y="1.5" width="3.5" height="12" fill="#a8a8a8" stroke="#333" stroke-width=".6"/><circle cx="8.7" cy="3.2" r=".9" fill="#4f4"/><path d="M7.5 6.5h2.5M7.5 9.5h2.5" stroke="#222"/><rect x="10.5" y="1.5" width="4" height="12" fill="#fff" stroke="#333" stroke-width=".6"/><rect x="10.5" y="1.5" width="4" height="2" fill="#222"/></svg><span class="t" style="left:51px;top:231px;font-size:12px;color:#f4f6fa">无执行类型指定</span><svg style="position:absolute;left:31px;top:248px" width="16" height="16" viewBox="0 0 16 16"><path d="M0.5 4.5h5l1 1h8v10h-14z" fill="#f7dc8a" stroke="#b07a10" stroke-width=".8"/><path d="M5 1h6l3 3v9H5z" fill="#e8e8e8" stroke="#888" stroke-width=".8"/><path d="M3 8h11v6H3z" fill="#f3e2a0" stroke="#a88a30" stroke-width=".6"/></svg><span class="t" style="left:51px;top:250px;font-size:12px;color:#f4f6fa">未登录程序</span><div style="left:2px;top:271px;width:9px;height:9px;background:linear-gradient(#fafafa,#dcdcdc);border:1px solid #b9b9b9;box-shadow:inset -1px -1px 0 #c8c8c8"></div><div style="left:4px;top:275px;width:5px;height:1px;background:#2c3c9c"></div><svg style="position:absolute;left:17px;top:267px" width="17" height="16" viewBox="0 0 17 16"><path d="M0.5 5.5c0-1 1-2 3-2h2l1 1h8v11h-14z" fill="#f7c64a" stroke="#b07a10" stroke-width=".9"/><path d="M2 8h12v7H2z" fill="#fff3c0"/><path d="M4 1.5h9v4H4z" fill="#4a78e8"/><path d="M2 2h2M13 2h3" stroke="#4a78e8" stroke-width="1.5"/><path d="M3.5 7.5h10v6h-10z" fill="#1f9a2a"/><path d="M13 8h3M1 12h3" stroke="#1f9a2a" stroke-width="2"/><path d="M5 9h7" stroke="#7fd07f"/></svg><span class="t" style="left:37px;top:269px;font-size:12.3px;color:#f4f6fa">FB/FUN</span><div style="left:16px;top:290px;width:9px;height:9px;background:linear-gradient(#fafafa,#dcdcdc);border:1px solid #b9b9b9;box-shadow:inset -1px -1px 0 #c8c8c8"></div><div style="left:18px;top:294px;width:5px;height:1px;background:#2c3c9c"></div><svg style="position:absolute;left:31px;top:286px" width="17" height="16" viewBox="0 0 17 16"><path d="M0.5 5.5c0-1 1-2 3-2h2l1 1h8v11h-14z" fill="#f7c64a" stroke="#b07a10" stroke-width=".9"/><path d="M2 8h12v7H2z" fill="#fff3c0"/><path d="M3.5 6.5h10v7h-10z" fill="#1f9a2a"/><path d="M13 6.5h3.5v3H13z" fill="#2aae35"/><path d="M5 8h7" stroke="#7fd07f"/><path d="M2 14.5h13" stroke="#c08a20"/></svg><span class="t" style="left:51px;top:288px;font-size:12px;color:#f4f6fa">读取色标</span><div style="left:30px;top:309px;width:9px;height:9px;background:linear-gradient(#fafafa,#dcdcdc);border:1px solid #b9b9b9;box-shadow:inset -1px -1px 0 #c8c8c8"></div><div style="left:32px;top:313px;width:5px;height:1px;background:#2c3c9c"></div><svg style="position:absolute;left:45px;top:305px" width="17" height="16" viewBox="0 0 17 16"><path d="M0.5 5.5c0-1 1-2 3-2h2l1 1h8v11h-14z" fill="#f7c64a" stroke="#b07a10" stroke-width=".9"/><path d="M2 8h12v7H2z" fill="#fff3c0"/><path d="M3.5 6.5h10v7h-10z" fill="#1f9a2a"/><path d="M13 6.5h3.5v3H13z" fill="#2aae35"/><path d="M5 8h7" stroke="#7fd07f"/><path d="M2 14.5h13" stroke="#c08a20"/></svg><span class="t" style="left:65px;top:307px;font-size:12.67px;color:#f4f6fa">STD_ReadMarkDetectData /Read mark detect data</span><svg style="position:absolute;left:59px;top:324px" width="17" height="16" viewBox="0 0 17 16"><path d="M1.5 1.5h8l1 1v12h-9z" fill="url(#lg1)" stroke="#8a8a7a" stroke-width=".8"/><rect x="5.5" y="6.5" width="10" height="9" fill="#fff" stroke="#4a3af0"/><path d="M5.5 9.5h10M5.5 12.5h10M8.5 6.5v9" stroke="#4a3af0"/></svg><span class="t" style="left:79px;top:326px;font-size:12px;color:#f4f6fa">局部标签</span><div style="left:0px;top:342px;width:404px;height:18px;background:#fff5a6"></div><svg style="position:absolute;left:59px;top:343px" width="15" height="16" viewBox="0 0 15 16"><path d="M1.5 1.5h9l3 3v11h-12z" fill="#e8eaee" stroke="#7a8088" stroke-width=".8"/><text x="7" y="12" font-size="8" font-weight="bold" fill="#111" text-anchor="middle" font-family="Liberation Sans">ST</text></svg><span class="t" style="left:79px;top:345px;font-size:12px;color:#000">程序本体</span><div style="left:16px;top:366px;width:9px;height:9px;background:linear-gradient(#fafafa,#dcdcdc);border:1px solid #b9b9b9;box-shadow:inset -1px -1px 0 #c8c8c8"></div><div style="left:18px;top:370px;width:5px;height:1px;background:#2c3c9c"></div><svg style="position:absolute;left:31px;top:362px" width="17" height="16" viewBox="0 0 17 16"><path d="M0.5 5.5c0-1 1-2 3-2h2l1 1h8v11h-14z" fill="#f7c64a" stroke="#b07a10" stroke-width=".9"/><path d="M2 8h12v7H2z" fill="#fff3c0"/><path d="M3.5 6.5h10v7h-10z" fill="#1f9a2a"/><path d="M13 6.5h3.5v3H13z" fill="#2aae35"/><path d="M5 8h7" stroke="#7fd07f"/><path d="M2 14.5h13" stroke="#c08a20"/></svg><span class="t" style="left:51px;top:364px;font-size:12px;color:#f4f6fa">色标补偿</span><div style="left:30px;top:385px;width:9px;height:9px;background:linear-gradient(#fafafa,#dcdcdc);border:1px solid #b9b9b9;box-shadow:inset -1px -1px 0 #c8c8c8"></div><div style="left:32px;top:389px;width:5px;height:1px;background:#2c3c9c"></div><div style="left:34px;top:387px;width:1px;height:5px;background:#2c3c9c"></div><svg style="position:absolute;left:45px;top:381px" width="17" height="16" viewBox="0 0 17 16"><path d="M0.5 5.5c0-1 1-2 3-2h2l1 1h8v11h-14z" fill="#f7c64a" stroke="#b07a10" stroke-width=".9"/><path d="M2 8h12v7H2z" fill="#fff3c0"/><path d="M3.5 6.5h10v7h-10z" fill="#1f9a2a"/><path d="M13 6.5h3.5v3H13z" fill="#2aae35"/><path d="M5 8h7" stroke="#7fd07f"/><path d="M2 14.5h13" stroke="#c08a20"/></svg><span class="t" style="left:65px;top:383px;font-size:12.73px;color:#f4f6fa">PAC_CalcMarkCompensation /Compensation calculation</span><div style="left:16px;top:404px;width:9px;height:9px;background:linear-gradient(#fafafa,#dcdcdc);border:1px solid #b9b9b9;box-shadow:inset -1px -1px 0 #c8c8c8"></div><div style="left:18px;top:408px;width:5px;height:1px;background:#2c3c9c"></div><svg style="position:absolute;left:31px;top:400px" width="17" height="16" viewBox="0 0 17 16"><path d="M0.5 5.5c0-1 1-2 3-2h2l1 1h8v11h-14z" fill="#f7c64a" stroke="#b07a10" stroke-width=".9"/><path d="M2 8h12v7H2z" fill="#fff3c0"/><path d="M3.5 6.5h10v7h-10z" fill="#1f9a2a"/><path d="M13 6.5h3.5v3H13z" fill="#2aae35"/><path d="M5 8h7" stroke="#7fd07f"/><path d="M2 14.5h13" stroke="#c08a20"/></svg><span class="t" style="left:51px;top:402px;font-size:12px;color:#f4f6fa">辅轴补偿修正</span><div style="left:30px;top:423px;width:9px;height:9px;background:linear-gradient(#fafafa,#dcdcdc);border:1px solid #b9b9b9;box-shadow:inset -1px -1px 0 #c8c8c8"></div><div style="left:32px;top:427px;width:5px;height:1px;background:#2c3c9c"></div><div style="left:34px;top:425px;width:1px;height:5px;background:#2c3c9c"></div><svg style="position:absolute;left:45px;top:419px" width="17" height="16" viewBox="0 0 17 16"><path d="M0.5 5.5c0-1 1-2 3-2h2l1 1h8v11h-14z" fill="#f7c64a" stroke="#b07a10" stroke-width=".9"/><path d="M2 8h12v7H2z" fill="#fff3c0"/><path d="M3.5 6.5h10v7h-10z" fill="#1f9a2a"/><path d="M13 6.5h3.5v3H13z" fill="#2aae35"/><path d="M5 8h7" stroke="#7fd07f"/><path d="M2 14.5h13" stroke="#c08a20"/></svg><span class="t" style="left:65px;top:421px;font-size:12.33px;color:#f4f6fa">STD_CtrlAuxiliaryAxis /Auxiliary axis correction</span><div style="left:2px;top:442px;width:9px;height:9px;background:linear-gradient(#fafafa,#dcdcdc);border:1px solid #b9b9b9;box-shadow:inset -1px -1px 0 #c8c8c8"></div><div style="left:4px;top:446px;width:5px;height:1px;background:#2c3c9c"></div><div style="left:6px;top:444px;width:1px;height:5px;background:#2c3c9c"></div><svg style="position:absolute;left:17px;top:438px" width="17" height="16" viewBox="0 0 17 16"><path d="M0.5 4.5h5l1 1h9v10h-15z" fill="#f7c64a" stroke="#b07a10" stroke-width=".8"/><rect x="4" y="3" width="11" height="11" fill="#fff" stroke="#3a3af0"/><path d="M4 6h11M4 9h11M4 12h11M8 3v11" stroke="#3a3af0"/></svg><span class="t" style="left:37px;top:440px;font-size:12px;color:#f4f6fa">标签</span><div style="left:2px;top:461px;width:9px;height:9px;background:linear-gradient(#fafafa,#dcdcdc);border:1px solid #b9b9b9;box-shadow:inset -1px -1px 0 #c8c8c8"></div><div style="left:4px;top:465px;width:5px;height:1px;background:#2c3c9c"></div><div style="left:6px;top:463px;width:1px;height:5px;background:#2c3c9c"></div><svg style="position:absolute;left:17px;top:457px" width="17" height="16" viewBox="0 0 17 16"><path d="M0.5 4.5h5l1 1h9v10h-15z" fill="#f7d060" stroke="#b07a10" stroke-width=".8"/><circle cx="6" cy="5" r="3" fill="#f080b0"/><rect x="9" y="2" width="6" height="6" fill="#6ad060"/><path d="M2 9h12v5H2z" fill="#d8e8b0"/></svg><span class="t" style="left:37px;top:459px;font-size:12px;color:#f4f6fa">软元件</span><div style="left:2px;top:480px;width:9px;height:9px;background:linear-gradient(#fafafa,#dcdcdc);border:1px solid #b9b9b9;box-shadow:inset -1px -1px 0 #c8c8c8"></div><div style="left:4px;top:484px;width:5px;height:1px;background:#2c3c9c"></div><div style="left:6px;top:482px;width:1px;height:5px;background:#2c3c9c"></div><svg style="position:absolute;left:17px;top:476px" width="17" height="16" viewBox="0 0 17 16"><path d="M0.5 4.5h5l1 1h9v10h-15z" fill="#f7c64a" stroke="#b07a10" stroke-width=".8"/><rect x="4" y="1" width="7" height="12" fill="#333"/><rect x="6" y="3" width="3" height="3" fill="#eee"/><circle cx="13" cy="11" r="2" fill="#3a6ee8"/></svg><span class="t" style="left:37px;top:478px;font-size:12px;color:#f4f6fa">参数</span></div><svg style="position:absolute;left:462px;top:138px" width="17" height="16" viewBox="0 0 17 16"><defs><linearGradient id="lg1" x1="0" y1="0" x2="1" y2="1"><stop offset="0" stop-color="#e8f6ff"/><stop offset=".5" stop-color="#6cc4f4"/><stop offset="1" stop-color="#2f8fd8"/></linearGradient></defs><path d="M1.5 1.5h8l1 1v12h-9z" fill="url(#lg1)" stroke="#8a8a7a" stroke-width=".8"/><rect x="5.5" y="6.5" width="10" height="9" fill="#fff" stroke="#4a3af0"/><path d="M5.5 9.5h10M5.5 12.5h10M8.5 6.5v9" stroke="#4a3af0"/></svg><span class="t" style="left:482px;top:140px;font-size:12.2px;color:#f4f6fa">ProgPou [PRG] [局部标签设置]</span><svg style="position:absolute;left:659px;top:141px" width="8" height="8" viewBox="0 0 8 8"><path d="M1 1l6 6M7 1L1 7" stroke="#3d4d6d" stroke-width="1.2"/></svg><svg style="position:absolute;left:679px;top:138px" width="14" height="16" viewBox="0 0 14 16"><path d="M1.5 1.5h8l3 3v10h-11z" fill="#fff" stroke="#111" stroke-width=".6"/><path d="M5 5v7M9 5v7M3 8.5h3M8 8.5h3" stroke="#e81818" stroke-width="1.8"/></svg><div style="left:697px;top:138px;width:76px;height:18px;overflow:hidden"><span class="t" style="left:0px;top:2px;font-size:12.2px;color:#f4f6fa">ProgPou [PRG] [程序本体]</span></div><svg style="position:absolute;left:776px;top:139px" width="8" height="10" viewBox="0 0 8 10"><path d="M6.5 1v8L1.5 5z" fill="none" stroke="#e8ecf4"/></svg><svg style="position:absolute;left:790px;top:139px" width="8" height="10" viewBox="0 0 8 10"><path d="M1.5 1v8l5-4z" fill="#e8ecf4"/></svg><svg style="position:absolute;left:802px;top:139px" width="10" height="10" viewBox="0 0 10 10"><path d="M1 1.5h8M1 4h8l-4 5z" stroke="#e8ecf4" fill="#e8ecf4"/></svg><div style="left:458px;top:157px;width:356px;height:539px;border:solid #f8e2a2;border-width:3px 2px 2px 1px"></div><div style="left:459px;top:160px;width:353px;height:534px;border:2px solid #8a8a8a;border-top-color:#7a7a7a;border-left-color:#808080;border-right-color:#a0a0a0;border-bottom-color:#a8a8a8"></div><div style="left:461px;top:162px;width:349px;height:530px;background:#fff"></div><div style="left:462px;top:163px;width:22px;height:513px;background:#efefef"></div><div style="left:794px;top:161px;width:16px;height:515px;background:#f0f0f0"></div><div style="left:794px;top:162px;width:16px;height:8px;background:#e4e4e4;border:1px solid #8f8f8f;border-top-color:#fff;border-left-color:#fff"></div><svg style="position:absolute;left:797px;top:174px" width="11" height="8" viewBox="0 0 11 8"><path d="M1.5 6.5l4-4 4 4" stroke="#555" stroke-width="2" fill="none"/></svg><div style="left:795px;top:187px;width:14px;height:58px;background:#cdcdcd"></div><svg style="position:absolute;left:797px;top:663px" width="11" height="8" viewBox="0 0 11 8"><path d="M1.5 1.5l4 4 4-4" stroke="#555" stroke-width="2" fill="none"/></svg><div style="left:461px;top:676px;width:350px;height:16px;background:#f0f0f0"></div><div style="left:479px;top:677px;width:113px;height:15px;background:#cdcdcd"></div><svg style="position:absolute;left:466px;top:680px" width="8" height="11" viewBox="0 0 8 11"><path d="M6 1.5l-4 4 4 4" stroke="#555" stroke-width="2" fill="none"/></svg><svg style="position:absolute;left:781px;top:680px" width="8" height="11" viewBox="0 0 8 11"><path d="M2 1.5l4 4-4 4" stroke="#555" stroke-width="2" fill="none"/></svg><div style="left:484px;top:161px;width:310px;height:515px;overflow:hidden"><span class="t" style="left:40px;top:3px;font-family:'Liberation Mono',monospace;font-size:17px;letter-spacing:1.13px;color:#008000;transform:scaleX(0.706);transform-origin:0 0;white-space:pre">// </span><span class="t" style="left:63.5px;top:5px;font-family:'Liberation Mono',monospace;font-size:21px;letter-spacing:-1.17px;color:#008000;transform:scaleX(0.7);transform-origin:0 0;white-space:pre">****************************************</span><span class="t" style="left:40px;top:20px;font-family:'Liberation Mono',monospace;font-size:17px;letter-spacing:1.13px;color:#008000;transform:scaleX(0.706);transform-origin:0 0;white-space:pre">// </span><span class="t" style="left:63.5px;top:22px;font-family:'Liberation Mono',monospace;font-size:21px;letter-spacing:-1.17px;color:#008000;transform:scaleX(0.7);transform-origin:0 0;white-space:pre">*</span><span class="t" style="left:40px;top:37px;font-family:'Liberation Mono',monospace;font-size:17px;letter-spacing:1.13px;color:#008000;transform:scaleX(0.706);transform-origin:0 0;white-space:pre">// </span><span class="t" style="left:63.5px;top:39px;font-family:'Liberation Mono',monospace;font-size:21px;letter-spacing:-1.17px;color:#008000;transform:scaleX(0.7);transform-origin:0 0;white-space:pre">*</span><span class="t" style="left:40px;top:54px;font-family:'Liberation Mono',monospace;font-size:17px;letter-spacing:1.13px;color:#008000;transform:scaleX(0.706);transform-origin:0 0;white-space:pre">// </span><span class="t" style="left:63.5px;top:56px;font-family:'Liberation Mono',monospace;font-size:21px;letter-spacing:-1.17px;color:#008000;transform:scaleX(0.7);transform-origin:0 0;white-space:pre">*</span><span class="t" style="left:72px;top:54px;font-family:'Liberation Mono',monospace;font-size:17px;letter-spacing:1.13px;color:#008000;transform:scaleX(0.706);transform-origin:0 0;white-space:pre">    &lt;FB NAME&gt;       STD_ReadMarkDetectData</span><span class="t" style="left:40px;top:71px;font-family:'Liberation Mono',monospace;font-size:17px;letter-spacing:1.13px;color:#008000;transform:scaleX(0.706);transform-origin:0 0;white-space:pre">// </span><span class="t" style="left:63.5px;top:73px;font-family:'Liberation Mono',monospace;font-size:21px;letter-spacing:-1.17px;color:#008000;transform:scaleX(0.7);transform-origin:0 0;white-space:pre">*</span><span class="t" style="left:72px;top:71px;font-family:'Liberation Mono',monospace;font-size:17px;letter-spacing:1.13px;color:#008000;transform:scaleX(0.706);transform-origin:0 0;white-space:pre">    &lt;Description&gt;   </span><span class="t" style="left:232px;top:72px;font-size:14.5px;letter-spacing:1.5px;color:#008000">マーク検出データ読出し</span><span class="t" style="left:40px;top:88px;font-family:'Liberation Mono',monospace;font-size:17px;letter-spacing:1.13px;color:#008000;transform:scaleX(0.706);transform-origin:0 0;white-space:pre">// </span><span class="t" style="left:63.5px;top:90px;font-family:'Liberation Mono',monospace;font-size:21px;letter-spacing:-1.17px;color:#008000;transform:scaleX(0.7);transform-origin:0 0;white-space:pre">*</span><span class="t" style="left:40px;top:105px;font-family:'Liberation Mono',monospace;font-size:17px;letter-spacing:1.13px;color:#008000;transform:scaleX(0.706);transform-origin:0 0;white-space:pre">// </span><span class="t" style="left:63.5px;top:107px;font-family:'Liberation Mono',monospace;font-size:21px;letter-spacing:-1.17px;color:#008000;transform:scaleX(0.7);transform-origin:0 0;white-space:pre">*</span><span class="t" style="left:40px;top:122px;font-family:'Liberation Mono',monospace;font-size:17px;letter-spacing:1.13px;color:#008000;transform:scaleX(0.706);transform-origin:0 0;white-space:pre">// </span><span class="t" style="left:63.5px;top:124px;font-family:'Liberation Mono',monospace;font-size:21px;letter-spacing:-1.17px;color:#008000;transform:scaleX(0.7);transform-origin:0 0;white-space:pre">*</span><span class="t" style="left:40px;top:139px;font-family:'Liberation Mono',monospace;font-size:17px;letter-spacing:1.13px;color:#008000;transform:scaleX(0.706);transform-origin:0 0;white-space:pre">// </span><span class="t" style="left:63.5px;top:141px;font-family:'Liberation Mono',monospace;font-size:21px;letter-spacing:-1.17px;color:#008000;transform:scaleX(0.7);transform-origin:0 0;white-space:pre">*</span><span class="t" style="left:40px;top:156px;font-family:'Liberation Mono',monospace;font-size:17px;letter-spacing:1.13px;color:#008000;transform:scaleX(0.706);transform-origin:0 0;white-space:pre">// </span><span class="t" style="left:63.5px;top:158px;font-family:'Liberation Mono',monospace;font-size:21px;letter-spacing:-1.17px;color:#008000;transform:scaleX(0.7);transform-origin:0 0;white-space:pre">*</span><span class="t" style="left:40px;top:173px;font-family:'Liberation Mono',monospace;font-size:17px;letter-spacing:1.13px;color:#008000;transform:scaleX(0.706);transform-origin:0 0;white-space:pre">// </span><span class="t" style="left:63.5px;top:175px;font-family:'Liberation Mono',monospace;font-size:21px;letter-spacing:-1.17px;color:#008000;transform:scaleX(0.7);transform-origin:0 0;white-space:pre">*</span><span class="t" style="left:72px;top:173px;font-family:'Liberation Mono',monospace;font-size:17px;letter-spacing:1.13px;color:#008000;transform:scaleX(0.706);transform-origin:0 0;white-space:pre">     COPYRIGHT (C) 2017 MITSUBISHI ELECTRIC</span><span class="t" style="left:40px;top:190px;font-family:'Liberation Mono',monospace;font-size:17px;letter-spacing:1.13px;color:#008000;transform:scaleX(0.706);transform-origin:0 0;white-space:pre">// </span><span class="t" style="left:63.5px;top:192px;font-family:'Liberation Mono',monospace;font-size:21px;letter-spacing:-1.17px;color:#008000;transform:scaleX(0.7);transform-origin:0 0;white-space:pre">*</span><span class="t" style="left:72px;top:190px;font-family:'Liberation Mono',monospace;font-size:17px;letter-spacing:1.13px;color:#008000;transform:scaleX(0.706);transform-origin:0 0;white-space:pre">     ALL RIGHT RESERVED</span><span class="t" style="left:40px;top:207px;font-family:'Liberation Mono',monospace;font-size:17px;letter-spacing:1.13px;color:#008000;transform:scaleX(0.706);transform-origin:0 0;white-space:pre">// </span><span class="t" style="left:63.5px;top:209px;font-family:'Liberation Mono',monospace;font-size:21px;letter-spacing:-1.17px;color:#008000;transform:scaleX(0.7);transform-origin:0 0;white-space:pre">****************************************</span><span class="t" style="left:40px;top:224px;font-family:'Liberation Mono',monospace;font-size:17px;letter-spacing:1.13px;color:#008000;transform:scaleX(0.706);transform-origin:0 0;white-space:pre">(</span><span class="t" style="left:47.5px;top:226px;font-family:'Liberation Mono',monospace;font-size:21px;letter-spacing:-1.17px;color:#008000;transform:scaleX(0.7);transform-origin:0 0;white-space:pre">*</span><span class="t" style="left:56px;top:224px;font-family:'Liberation Mono',monospace;font-size:17px;letter-spacing:1.13px;color:#008000;transform:scaleX(0.706);transform-origin:0 0;white-space:pre"> &lt;Base Program&gt;</span><span class="t" style="left:40px;top:241px;font-family:'Liberation Mono',monospace;font-size:17px;letter-spacing:1.13px;color:#008000;transform:scaleX(0.706);transform-origin:0 0;white-space:pre">    [Project NAME]  PAC_PackagingControl</span><span class="t" style="left:40px;top:258px;font-family:'Liberation Mono',monospace;font-size:17px;letter-spacing:1.13px;color:#008000;transform:scaleX(0.706);transform-origin:0 0;white-space:pre">    [FB NAME]       STD_ReadMarkDetectData</span><span class="t" style="left:40px;top:275px;font-family:'Liberation Mono',monospace;font-size:17px;letter-spacing:1.13px;color:#008000;transform:scaleX(0.706);transform-origin:0 0;white-space:pre">    [Version]       1.000A  Rev.48</span><span class="t" style="left:39.5px;top:294px;font-family:'Liberation Mono',monospace;font-size:21px;letter-spacing:-1.17px;color:#008000;transform:scaleX(0.7);transform-origin:0 0;white-space:pre">*</span><span class="t" style="left:48px;top:292px;font-family:'Liberation Mono',monospace;font-size:17px;letter-spacing:1.13px;color:#008000;transform:scaleX(0.706);transform-origin:0 0;white-space:pre">)</span><span class="t" style="left:40px;top:309px;font-family:'Liberation Mono',monospace;font-size:17px;letter-spacing:1.13px;color:#008000;transform:scaleX(0.706);transform-origin:0 0;white-space:pre">(</span><span class="t" style="left:47.5px;top:311px;font-family:'Liberation Mono',monospace;font-size:21px;letter-spacing:-1.17px;color:#008000;transform:scaleX(0.7);transform-origin:0 0;white-space:pre">*</span><span class="t" style="left:56px;top:309px;font-family:'Liberation Mono',monospace;font-size:17px;letter-spacing:1.13px;color:#008000;transform:scaleX(0.706);transform-origin:0 0;white-space:pre"> &lt;Program modify list&gt;</span><span class="t" style="left:40px;top:326px;font-family:'Liberation Mono',monospace;font-size:17px;letter-spacing:1.13px;color:#008000;transform:scaleX(0.706);transform-origin:0 0;white-space:pre">No.         </span><span class="t" style="left:136px;top:327px;font-size:14.5px;letter-spacing:1.5px;color:#008000">変更内容</span><span class="t" style="left:40px;top:343px;font-family:'Liberation Mono',monospace;font-size:17px;letter-spacing:1.13px;color:#008000;transform:scaleX(0.706);transform-origin:0 0;white-space:pre">1.000A      </span><span class="t" style="left:136px;top:344px;font-size:14.5px;letter-spacing:1.5px;color:#008000">新規作成</span><span class="t" style="left:40px;top:360px;font-family:'Liberation Mono',monospace;font-size:17px;letter-spacing:1.13px;color:#008000;transform:scaleX(0.706);transform-origin:0 0;white-space:pre">1.001B      APLIB0016(</span><span class="t" style="left:216px;top:361px;font-size:14.5px;letter-spacing:1.5px;color:#008000">ライセンス対応</span><span class="t" style="left:40px;top:377px;font-family:'Liberation Mono',monospace;font-size:17px;letter-spacing:1.13px;color:#008000;transform:scaleX(0.706);transform-origin:0 0;white-space:pre">            APLIB0019(</span><span class="t" style="left:216px;top:378px;font-size:14.5px;letter-spacing:1.5px;color:#008000">サブルーチン化</span><span class="t" style="left:40px;top:394px;font-family:'Liberation Mono',monospace;font-size:17px;letter-spacing:1.13px;color:#008000;transform:scaleX(0.706);transform-origin:0 0;white-space:pre">            APLIB0023(</span><span class="t" style="left:216px;top:395px;font-size:14.5px;letter-spacing:1.5px;color:#008000">シーケンサエラー</span><span class="t" style="left:39.5px;top:413px;font-family:'Liberation Mono',monospace;font-size:21px;letter-spacing:-1.17px;color:#008000;transform:scaleX(0.7);transform-origin:0 0;white-space:pre">*</span><span class="t" style="left:48px;top:411px;font-family:'Liberation Mono',monospace;font-size:17px;letter-spacing:1.13px;color:#008000;transform:scaleX(0.706);transform-origin:0 0;white-space:pre">)</span><span class="t" style="left:40px;top:445px;font-family:'Liberation Mono',monospace;font-size:17px;letter-spacing:1.13px;color:#008000;transform:scaleX(0.706);transform-origin:0 0;white-space:pre">//APLIB0019-S</span><span class="t" style="left:40px;top:462px;font-family:'Liberation Mono',monospace;font-size:17px;letter-spacing:1.13px;color:#0000ff;transform:scaleX(0.706);transform-origin:0 0;white-space:pre">IF</span><span class="t" style="left:56px;top:462px;font-family:'Liberation Mono',monospace;font-size:17px;letter-spacing:1.13px;color:#000;transform:scaleX(0.706);transform-origin:0 0;white-space:pre"> (</span><span class="t" style="left:72px;top:462px;font-family:'Liberation Mono',monospace;font-size:17px;letter-spacing:1.13px;color:#ff00ff;transform:scaleX(0.706);transform-origin:0 0;white-space:pre">i_bEN</span><span class="t" style="left:112px;top:462px;font-family:'Liberation Mono',monospace;font-size:17px;letter-spacing:1.13px;color:#000;transform:scaleX(0.706);transform-origin:0 0;white-space:pre"> AND (NOT </span><span class="t" style="left:192px;top:462px;font-family:'Liberation Mono',monospace;font-size:17px;letter-spacing:1.13px;color:#ff00ff;transform:scaleX(0.706);transform-origin:0 0;white-space:pre">o_bENO</span><span class="t" style="left:240px;top:462px;font-family:'Liberation Mono',monospace;font-size:17px;letter-spacing:1.13px;color:#000;transform:scaleX(0.706);transform-origin:0 0;white-space:pre">)) </span><span class="t" style="left:264px;top:462px;font-family:'Liberation Mono',monospace;font-size:17px;letter-spacing:1.13px;color:#0000ff;transform:scaleX(0.706);transform-origin:0 0;white-space:pre">THEN</span><span class="t" style="left:72px;top:479px;font-family:'Liberation Mono',monospace;font-size:17px;letter-spacing:1.13px;color:#ff00ff;transform:scaleX(0.706);transform-origin:0 0;white-space:pre">bEnPls</span><span class="t" style="left:120px;top:479px;font-family:'Liberation Mono',monospace;font-size:17px;letter-spacing:1.13px;color:#000;transform:scaleX(0.706);transform-origin:0 0;white-space:pre"> := </span><span class="t" style="left:152px;top:479px;font-family:'Liberation Mono',monospace;font-size:17px;letter-spacing:1.13px;color:#0000ff;transform:scaleX(0.706);transform-origin:0 0;white-space:pre">TRUE</span><span class="t" style="left:184px;top:479px;font-family:'Liberation Mono',monospace;font-size:17px;letter-spacing:1.13px;color:#000;transform:scaleX(0.706);transform-origin:0 0;white-space:pre">;</span><span class="t" style="left:232px;top:479px;font-family:'Liberation Mono',monospace;font-size:17px;letter-spacing:1.13px;color:#008000;transform:scaleX(0.706);transform-origin:0 0;white-space:pre">//i_bEN</span><span class="t" style="left:288px;top:480px;font-size:14.5px;letter-spacing:1.5px;color:#008000">立上り</span><span class="t" style="left:72px;top:496px;font-family:'Liberation Mono',monospace;font-size:17px;letter-spacing:1.13px;color:#ff00ff;transform:scaleX(0.706);transform-origin:0 0;white-space:pre">o_bENO</span><span class="t" style="left:120px;top:496px;font-family:'Liberation Mono',monospace;font-size:17px;letter-spacing:1.13px;color:#000;transform:scaleX(0.706);transform-origin:0 0;white-space:pre"> := </span><span class="t" style="left:152px;top:496px;font-family:'Liberation Mono',monospace;font-size:17px;letter-spacing:1.13px;color:#0000ff;transform:scaleX(0.706);transform-origin:0 0;white-space:pre">TRUE</span><span class="t" style="left:184px;top:496px;font-family:'Liberation Mono',monospace;font-size:17px;letter-spacing:1.13px;color:#000;transform:scaleX(0.706);transform-origin:0 0;white-space:pre">;</span><span class="t" style="left:232px;top:496px;font-family:'Liberation Mono',monospace;font-size:17px;letter-spacing:1.13px;color:#008000;transform:scaleX(0.706);transform-origin:0 0;white-space:pre">//#5111</span><div style="left:31px;top:237px;width:1px;height:61px;background:#888"></div><div style="left:31px;top:322px;width:1px;height:95px;background:#888"></div><div style="left:31px;top:475px;width:1px;height:40px;background:#888"></div><div style="left:31px;top:298px;width:5px;height:1px;background:#888"></div><div style="left:31px;top:417px;width:5px;height:1px;background:#888"></div><div style="left:72px;top:373px;width:1px;height:17px;background:#e6e6e6"></div><div style="left:104px;top:373px;width:1px;height:17px;background:#e6e6e6"></div><div style="left:72px;top:390px;width:1px;height:17px;background:#e6e6e6"></div><div style="left:104px;top:390px;width:1px;height:17px;background:#e6e6e6"></div></div><svg style="position:absolute;left:628px;top:605px" width="15" height="16" viewBox="0 0 15 16"><circle cx="7" cy="9" r="6.2" fill="none" stroke="#008000" stroke-width="1"/><path d="M5.3 6.5l1.9-1.3v7.6" stroke="#008000" stroke-width="1.1" fill="none"/></svg><div style="left:511px;top:389px;width:9px;height:9px;border:1px solid #8a8a8a;background:#fff"></div><div style="left:513px;top:393px;width:5px;height:1px;background:#666"></div><div style="left:511px;top:474px;width:9px;height:9px;border:1px solid #8a8a8a;background:#fff"></div><div style="left:513px;top:478px;width:5px;height:1px;background:#666"></div><div style="left:511px;top:627px;width:9px;height:9px;border:1px solid #8a8a8a;background:#fff"></div><div style="left:513px;top:631px;width:5px;height:1px;background:#666"></div><div style="left:462px;top:161px;width:48px;height:515px;overflow:hidden"><span class="t" style="left:38px;top:3px;font-family:'Liberation Mono',monospace;font-size:17px;letter-spacing:1.13px;color:#008000;transform:scaleX(0.706);transform-origin:0 0">1</span><span class="t" style="left:38px;top:20px;font-family:'Liberation Mono',monospace;font-size:17px;letter-spacing:1.13px;color:#008000;transform:scaleX(0.706);transform-origin:0 0">2</span><span class="t" style="left:38px;top:37px;font-family:'Liberation Mono',monospace;font-size:17px;letter-spacing:1.13px;color:#008000;transform:scaleX(0.706);transform-origin:0 0">3</span><span class="t" style="left:38px;top:54px;font-family:'Liberation Mono',monospace;font-size:17px;letter-spacing:1.13px;color:#008000;transform:scaleX(0.706);transform-origin:0 0">4</span><span class="t" style="left:38px;top:71px;font-family:'Liberation Mono',monospace;font-size:17px;letter-spacing:1.13px;color:#008000;transform:scaleX(0.706);transform-origin:0 0">5</span><span class="t" style="left:38px;top:88px;font-family:'Liberation Mono',monospace;font-size:17px;letter-spacing:1.13px;color:#008000;transform:scaleX(0.706);transform-origin:0 0">6</span><span class="t" style="left:38px;top:105px;font-family:'Liberation Mono',monospace;font-size:17px;letter-spacing:1.13px;color:#008000;transform:scaleX(0.706);transform-origin:0 0">7</span><span class="t" style="left:38px;top:122px;font-family:'Liberation Mono',monospace;font-size:17px;letter-spacing:1.13px;color:#008000;transform:scaleX(0.706);transform-origin:0 0">8</span><span class="t" style="left:38px;top:139px;font-family:'Liberation Mono',monospace;font-size:17px;letter-spacing:1.13px;color:#008000;transform:scaleX(0.706);transform-origin:0 0">9</span><span class="t" style="left:30px;top:156px;font-family:'Liberation Mono',monospace;font-size:17px;letter-spacing:1.13px;color:#008000;transform:scaleX(0.706);transform-origin:0 0">10</span><span class="t" style="left:30px;top:173px;font-family:'Liberation Mono',monospace;font-size:17px;letter-spacing:1.13px;color:#008000;transform:scaleX(0.706);transform-origin:0 0">11</span><span class="t" style="left:30px;top:190px;font-family:'Liberation Mono',monospace;font-size:17px;letter-spacing:1.13px;color:#008000;transform:scaleX(0.706);transform-origin:0 0">12</span><span class="t" style="left:30px;top:207px;font-family:'Liberation Mono',monospace;font-size:17px;letter-spacing:1.13px;color:#008000;transform:scaleX(0.706);transform-origin:0 0">13</span><span class="t" style="left:30px;top:224px;font-family:'Liberation Mono',monospace;font-size:17px;letter-spacing:1.13px;color:#008000;transform:scaleX(0.706);transform-origin:0 0">14</span><span class="t" style="left:30px;top:241px;font-family:'Liberation Mono',monospace;font-size:17px;letter-spacing:1.13px;color:#008000;transform:scaleX(0.706);transform-origin:0 0">15</span><span class="t" style="left:30px;top:258px;font-family:'Liberation Mono',monospace;font-size:17px;letter-spacing:1.13px;color:#008000;transform:scaleX(0.706);transform-origin:0 0">16</span><span class="t" style="left:30px;top:275px;font-family:'Liberation Mono',monospace;font-size:17px;letter-spacing:1.13px;color:#008000;transform:scaleX(0.706);transform-origin:0 0">17</span><span class="t" style="left:30px;top:292px;font-family:'Liberation Mono',monospace;font-size:17px;letter-spacing:1.13px;color:#008000;transform:scaleX(0.706);transform-origin:0 0">18</span><span class="t" style="left:30px;top:309px;font-family:'Liberation Mono',monospace;font-size:17px;letter-spacing:1.13px;color:#008000;transform:scaleX(0.706);transform-origin:0 0">19</span><span class="t" style="left:30px;top:326px;font-family:'Liberation Mono',monospace;font-size:17px;letter-spacing:1.13px;color:#008000;transform:scaleX(0.706);transform-origin:0 0">20</span><span class="t" style="left:30px;top:343px;font-family:'Liberation Mono',monospace;font-size:17px;letter-spacing:1.13px;color:#008000;transform:scaleX(0.706);transform-origin:0 0">21</span><span class="t" style="left:30px;top:360px;font-family:'Liberation Mono',monospace;font-size:17px;letter-spacing:1.13px;color:#008000;transform:scaleX(0.706);transform-origin:0 0">22</span><span class="t" style="left:30px;top:377px;font-family:'Liberation Mono',monospace;font-size:17px;letter-spacing:1.13px;color:#008000;transform:scaleX(0.706);transform-origin:0 0">23</span><span class="t" style="left:30px;top:394px;font-family:'Liberation Mono',monospace;font-size:17px;letter-spacing:1.13px;color:#008000;transform:scaleX(0.706);transform-origin:0 0">24</span><span class="t" style="left:30px;top:411px;font-family:'Liberation Mono',monospace;font-size:17px;letter-spacing:1.13px;color:#008000;transform:scaleX(0.706);transform-origin:0 0">25</span><span class="t" style="left:30px;top:428px;font-family:'Liberation Mono',monospace;font-size:17px;letter-spacing:1.13px;color:#008000;transform:scaleX(0.706);transform-origin:0 0">26</span><span class="t" style="left:30px;top:445px;font-family:'Liberation Mono',monospace;font-size:17px;letter-spacing:1.13px;color:#008000;transform:scaleX(0.706);transform-origin:0 0">27</span><span class="t" style="left:30px;top:462px;font-family:'Liberation Mono',monospace;font-size:17px;letter-spacing:1.13px;color:#008000;transform:scaleX(0.706);transform-origin:0 0">28</span><span class="t" style="left:30px;top:479px;font-family:'Liberation Mono',monospace;font-size:17px;letter-spacing:1.13px;color:#008000;transform:scaleX(0.706);transform-origin:0 0">29</span><span class="t" style="left:30px;top:496px;font-family:'Liberation Mono',monospace;font-size:17px;letter-spacing:1.13px;color:#008000;transform:scaleX(0.706);transform-origin:0 0">30</span></div><div style="left:509px;top:161px;width:1px;height:515px;background-image:linear-gradient(#008000 50%,transparent 50%);background-size:1px 2px"></div><div style="left:814px;top:157px;width:5px;height:540px;background:#283858"></div><div style="left:819px;top:134px;width:175px;height:26px;background:linear-gradient(#4d6086,#3a4c6f);border-radius:2px 0 0 0"></div><span class="t" style="left:824px;top:140px;font-size:14.5px;color:#eef2f8">部件选择</span><svg style="position:absolute;left:988px;top:139px" width="10" height="14" viewBox="0 0 10 14"><path d="M2.5 1.5h5v7h-5zM1 8.5h8M5 8.5v5" stroke="#e8ecf4" stroke-width="1.2" fill="none"/></svg><div style="left:819px;top:159px;width:175px;height:256px;background:#bcc7d8;border-left:2px solid #8b94a4;border-top:1px solid #8b94a4"></div><div style="left:821px;top:160px;width:173px;height:75px;background:linear-gradient(#c3cddd,#b8c4d6);border:1px solid #a9b5c8;border-radius:2px"></div><div style="left:824px;top:162px;width:170px;height:20px;background:#fff"></div><span class="t" style="left:827px;top:166px;font-size:12px;color:#6d6d6d">(部件搜索)</span><svg style="position:absolute;left:826px;top:186px" width="17" height="17" viewBox="0 0 17 17"><path d="M6 1h3v3h2V1h3v5l2 4v5h-5v-4H8v4H3v-5l3-4z" fill="#8d939b"/><path d="M8 6h3M8 8h3" stroke="#c8ccd2"/><path d="M0 12l5-4v2.5h6v3H5V16z" fill="#a9aeb5" stroke="#7d838b" stroke-width=".6"/></svg><svg style="position:absolute;left:848px;top:186px" width="17" height="17" viewBox="0 0 17 17"><path d="M3 1h3v3h2V1h3v5l2 4v5H8v-4H5v4H0v-5l3-4z" fill="#8d939b"/><path d="M5 6h3M5 8h3" stroke="#c8ccd2"/><path d="M17 12l-5-4v2.5H6v3h6V16z" fill="#a9aeb5" stroke="#7d838b" stroke-width=".6"/></svg><div style="left:869px;top:186px;width:1px;height:18px;background:#7a869c"></div><svg style="position:absolute;left:876px;top:186px" width="17" height="17" viewBox="0 0 17 17"><circle cx="6" cy="8" r="5" fill="#b0b5bb"/><rect x="7" y="5" width="9" height="11" fill="#c8ccd1" stroke="#8f959d"/><path d="M7 8h9M7 11h9M7 14h9" stroke="#8f959d"/></svg><div style="left:897px;top:186px;width:1px;height:18px;background:#7a869c"></div><svg style="position:absolute;left:905px;top:186px" width="17" height="17" viewBox="0 0 17 17"><path d="M2 2h10v10H2z" fill="#c4c8cd" stroke="#8f959d"/><path d="M6 8h8v8" stroke="#8f959d" fill="none" stroke-width="2"/></svg><svg style="position:absolute;left:921px;top:193px" width="6" height="4" viewBox="0 0 6 4"><path d="M0 0h6l-3 4z" fill="#888"/></svg><svg style="position:absolute;left:934px;top:186px" width="17" height="17" viewBox="0 0 17 17"><path d="M2 2h10v10H2z" fill="#c4c8cd" stroke="#8f959d"/><path d="M7 8l8 8M15 8l-8 8" stroke="#777" stroke-width="2"/></svg><div style="left:825px;top:207px;width:169px;height:2px;background:#fff;border-top:1px solid #a3aec0"></div><svg style="position:absolute;left:826px;top:212px" width="17" height="17" viewBox="0 0 17 17"><path d="M8.5 1l2.2 5 5.3.5-4 3.6 1.2 5.3-4.7-2.8-4.7 2.8 1.2-5.3-4-3.6 5.3-.5z" fill="#c0c4ca" stroke="#9aa0a8" stroke-width=".6"/></svg><svg style="position:absolute;left:848px;top:212px" width="17" height="17" viewBox="0 0 17 17"><path d="M1 5h6l1 2h8v9H1z" fill="#c6cacf" stroke="#9aa0a8" stroke-width=".8"/><path d="M4 1v4M2 3h4" stroke="#9aa0a8"/></svg><svg style="position:absolute;left:871px;top:212px" width="17" height="17" viewBox="0 0 17 17"><path d="M2 2l12 12M14 2L2 14" stroke="#6f747b" stroke-width="1.6"/></svg><div style="left:891px;top:212px;width:1px;height:18px;background:#7a869c"></div><svg style="position:absolute;left:898px;top:213px" width="17" height="17" viewBox="0 0 17 17"><rect x="1" y="4" width="14" height="11" fill="#c4c8cd" stroke="#8f959d"/><path d="M5 8h6M8 8v5" stroke="#555" stroke-width="1.5"/></svg><svg style="position:absolute;left:917px;top:219px" width="6" height="4" viewBox="0 0 6 4"><path d="M0 0h6l-3 4z" fill="#888"/></svg><div style="left:821px;top:237px;width:173px;height:178px;background:#f0f0f0;border:1px solid #d0d4da;border-right:none"></div><div style="left:822px;top:238px;width:172px;height:176px;border:1px solid #fbbf6a;border-right:none;border-bottom:none"></div><span class="t" style="left:832px;top:245px;font-size:12px;color:#111;">显示对象:</span><div style="left:965px;top:240px;width:29px;height:21px;background:linear-gradient(#f4f4f4,#e2e2e2);border:1px solid #a9a9a9"></div><span class="t" style="left:976px;top:245px;font-size:12px;color:#111">全部</span><div style="left:823px;top:262px;width:171px;height:126px;background:#d6e8fb;border-left:1px solid #5a8ad0;border-top:1px solid #5a8ad0"></div><span class="t" style="left:828px;top:266px;font-size:12px;color:#222">顺序指令</span><div style="left:824px;top:281px;width:170px;height:1px;background:#2a3a5c"></div><span class="t" style="left:841px;top:285px;font-size:12px;color:#222">触点指令</span><div style="left:824px;top:300px;width:170px;height:1px;background:#2a3a5c"></div><span class="t" style="left:841px;top:304px;font-size:12px;color:#222">合并指令</span><div style="left:824px;top:319px;width:170px;height:1px;background:#2a3a5c"></div><span class="t" style="left:841px;top:323px;font-size:12px;color:#222">输出指令</span><div style="left:824px;top:338px;width:170px;height:1px;background:#2a3a5c"></div><span class="t" style="left:841px;top:342px;font-size:12px;color:#222">移位指令</span><div style="left:824px;top:357px;width:170px;height:1px;background:#2a3a5c"></div><span class="t" style="left:841px;top:361px;font-size:12px;color:#222">主控指令</span><div style="left:824px;top:373px;width:170px;height:3px;background:#2e4266"></div><div style="left:824px;top:376px;width:170px;height:1px;background:#9fc0e8"></div><div style="left:823px;top:387px;width:171px;height:2px;background:#f0f0f0"></div><div style="left:822px;top:389px;width:47px;height:24px;background:linear-gradient(#ffc87a,#fff1dc);border-bottom:2px solid #1f5ed2"></div><span class="t" style="left:826px;top:395px;font-size:12px;color:#111">部件...</span><div style="left:870px;top:389px;width:44px;height:22px;background:linear-gradient(#e8f1fd,#c7dcf6);border:1px solid #2d62c8;border-top:none;border-radius:0 0 3px 3px"></div><span class="t" style="left:874px;top:394px;font-size:12px;color:#222">收藏...</span><div style="left:916px;top:389px;width:35px;height:22px;background:linear-gradient(#e8f1fd,#c7dcf6);border:1px solid #2d62c8;border-top:none;border-radius:0 0 3px 3px"></div><span class="t" style="left:920px;top:394px;font-size:12px;color:#222">履历</span><div style="left:952px;top:389px;width:35px;height:22px;background:linear-gradient(#e8f1fd,#c7dcf6);border:1px solid #2d62c8;border-top:none;border-radius:0 0 3px 3px"></div><span class="t" style="left:956px;top:394px;font-size:12px;color:#222">模块</span><div style="left:988px;top:389px;width:10px;height:22px;background:linear-gradient(#e8f1fd,#c7dcf6);border:1px solid #2d62c8;border-top:none;border-radius:0 0 3px 3px"></div><div style="left:819px;top:413px;width:175px;height:2px;background:#fff"></div><div style="left:819px;top:419px;width:175px;height:26px;background:linear-gradient(#4d6086,#3a4c6f);border-radius:2px 0 0 0"></div><span class="t" style="left:824px;top:426px;font-size:14.5px;color:#eef2f8">配置详细信息输入</span><svg style="position:absolute;left:988px;top:425px" width="10" height="14" viewBox="0 0 10 14"><path d="M2.5 1.5h5v7h-5zM1 8.5h8M5 8.5v5" stroke="#e8ecf4" stroke-width="1.2" fill="none"/></svg><div style="left:819px;top:444px;width:175px;height:253px;background:#34476a;border-left:2px solid #8f8f8f;border-top:2px solid #8f8f8f"></div><div style="left:821px;top:446px;width:1px;height:251px;background:#5d8cd6"></div><div style="left:822px;top:658px;width:172px;height:5px;background:linear-gradient(#a9cdf5,#8fb8e8);border-bottom:1px solid #5e88c8"></div><div style="left:822px;top:663px;width:172px;height:34px;background:#d7e7fd"></div></body></html>
